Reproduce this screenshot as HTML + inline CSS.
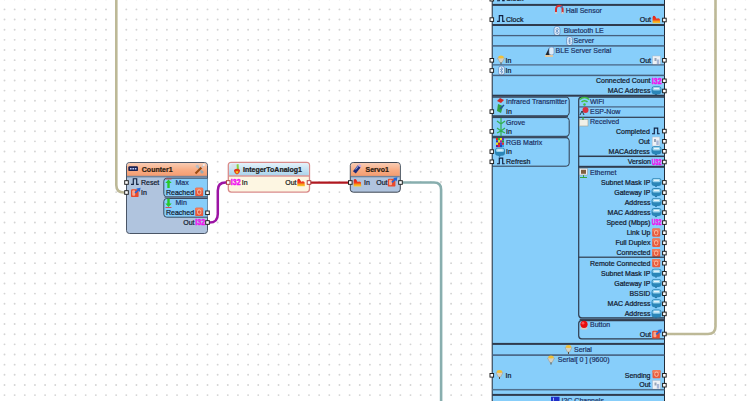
<!DOCTYPE html>
<html><head><meta charset="utf-8"><style>
html,body{margin:0;padding:0;background:#fff;width:748px;height:401px;overflow:hidden}
svg{display:block;font-family:"Liberation Sans", sans-serif}
</style></head><body>
<svg width="748" height="401" viewBox="0 0 748 401">
<g fill="#d4d4d4"><circle cx="4.50" cy="-0.75" r="0.95"/><circle cx="4.50" cy="9.40" r="0.95"/><circle cx="4.50" cy="19.55" r="0.95"/><circle cx="4.50" cy="29.70" r="0.95"/><circle cx="4.50" cy="39.85" r="0.95"/><circle cx="4.50" cy="50.00" r="0.95"/><circle cx="4.50" cy="60.15" r="0.95"/><circle cx="4.50" cy="70.30" r="0.95"/><circle cx="4.50" cy="80.45" r="0.95"/><circle cx="4.50" cy="90.60" r="0.95"/><circle cx="4.50" cy="100.75" r="0.95"/><circle cx="4.50" cy="110.90" r="0.95"/><circle cx="4.50" cy="121.05" r="0.95"/><circle cx="4.50" cy="131.20" r="0.95"/><circle cx="4.50" cy="141.35" r="0.95"/><circle cx="4.50" cy="151.50" r="0.95"/><circle cx="4.50" cy="161.65" r="0.95"/><circle cx="4.50" cy="171.80" r="0.95"/><circle cx="4.50" cy="181.95" r="0.95"/><circle cx="4.50" cy="192.10" r="0.95"/><circle cx="4.50" cy="202.25" r="0.95"/><circle cx="4.50" cy="212.40" r="0.95"/><circle cx="4.50" cy="222.55" r="0.95"/><circle cx="4.50" cy="232.70" r="0.95"/><circle cx="4.50" cy="242.85" r="0.95"/><circle cx="4.50" cy="253.00" r="0.95"/><circle cx="4.50" cy="263.15" r="0.95"/><circle cx="4.50" cy="273.30" r="0.95"/><circle cx="4.50" cy="283.45" r="0.95"/><circle cx="4.50" cy="293.60" r="0.95"/><circle cx="4.50" cy="303.75" r="0.95"/><circle cx="4.50" cy="313.90" r="0.95"/><circle cx="4.50" cy="324.05" r="0.95"/><circle cx="4.50" cy="334.20" r="0.95"/><circle cx="4.50" cy="344.35" r="0.95"/><circle cx="4.50" cy="354.50" r="0.95"/><circle cx="4.50" cy="364.65" r="0.95"/><circle cx="4.50" cy="374.80" r="0.95"/><circle cx="4.50" cy="384.95" r="0.95"/><circle cx="4.50" cy="395.10" r="0.95"/><circle cx="14.65" cy="-0.75" r="0.95"/><circle cx="14.65" cy="9.40" r="0.95"/><circle cx="14.65" cy="19.55" r="0.95"/><circle cx="14.65" cy="29.70" r="0.95"/><circle cx="14.65" cy="39.85" r="0.95"/><circle cx="14.65" cy="50.00" r="0.95"/><circle cx="14.65" cy="60.15" r="0.95"/><circle cx="14.65" cy="70.30" r="0.95"/><circle cx="14.65" cy="80.45" r="0.95"/><circle cx="14.65" cy="90.60" r="0.95"/><circle cx="14.65" cy="100.75" r="0.95"/><circle cx="14.65" cy="110.90" r="0.95"/><circle cx="14.65" cy="121.05" r="0.95"/><circle cx="14.65" cy="131.20" r="0.95"/><circle cx="14.65" cy="141.35" r="0.95"/><circle cx="14.65" cy="151.50" r="0.95"/><circle cx="14.65" cy="161.65" r="0.95"/><circle cx="14.65" cy="171.80" r="0.95"/><circle cx="14.65" cy="181.95" r="0.95"/><circle cx="14.65" cy="192.10" r="0.95"/><circle cx="14.65" cy="202.25" r="0.95"/><circle cx="14.65" cy="212.40" r="0.95"/><circle cx="14.65" cy="222.55" r="0.95"/><circle cx="14.65" cy="232.70" r="0.95"/><circle cx="14.65" cy="242.85" r="0.95"/><circle cx="14.65" cy="253.00" r="0.95"/><circle cx="14.65" cy="263.15" r="0.95"/><circle cx="14.65" cy="273.30" r="0.95"/><circle cx="14.65" cy="283.45" r="0.95"/><circle cx="14.65" cy="293.60" r="0.95"/><circle cx="14.65" cy="303.75" r="0.95"/><circle cx="14.65" cy="313.90" r="0.95"/><circle cx="14.65" cy="324.05" r="0.95"/><circle cx="14.65" cy="334.20" r="0.95"/><circle cx="14.65" cy="344.35" r="0.95"/><circle cx="14.65" cy="354.50" r="0.95"/><circle cx="14.65" cy="364.65" r="0.95"/><circle cx="14.65" cy="374.80" r="0.95"/><circle cx="14.65" cy="384.95" r="0.95"/><circle cx="14.65" cy="395.10" r="0.95"/><circle cx="24.80" cy="-0.75" r="0.95"/><circle cx="24.80" cy="9.40" r="0.95"/><circle cx="24.80" cy="19.55" r="0.95"/><circle cx="24.80" cy="29.70" r="0.95"/><circle cx="24.80" cy="39.85" r="0.95"/><circle cx="24.80" cy="50.00" r="0.95"/><circle cx="24.80" cy="60.15" r="0.95"/><circle cx="24.80" cy="70.30" r="0.95"/><circle cx="24.80" cy="80.45" r="0.95"/><circle cx="24.80" cy="90.60" r="0.95"/><circle cx="24.80" cy="100.75" r="0.95"/><circle cx="24.80" cy="110.90" r="0.95"/><circle cx="24.80" cy="121.05" r="0.95"/><circle cx="24.80" cy="131.20" r="0.95"/><circle cx="24.80" cy="141.35" r="0.95"/><circle cx="24.80" cy="151.50" r="0.95"/><circle cx="24.80" cy="161.65" r="0.95"/><circle cx="24.80" cy="171.80" r="0.95"/><circle cx="24.80" cy="181.95" r="0.95"/><circle cx="24.80" cy="192.10" r="0.95"/><circle cx="24.80" cy="202.25" r="0.95"/><circle cx="24.80" cy="212.40" r="0.95"/><circle cx="24.80" cy="222.55" r="0.95"/><circle cx="24.80" cy="232.70" r="0.95"/><circle cx="24.80" cy="242.85" r="0.95"/><circle cx="24.80" cy="253.00" r="0.95"/><circle cx="24.80" cy="263.15" r="0.95"/><circle cx="24.80" cy="273.30" r="0.95"/><circle cx="24.80" cy="283.45" r="0.95"/><circle cx="24.80" cy="293.60" r="0.95"/><circle cx="24.80" cy="303.75" r="0.95"/><circle cx="24.80" cy="313.90" r="0.95"/><circle cx="24.80" cy="324.05" r="0.95"/><circle cx="24.80" cy="334.20" r="0.95"/><circle cx="24.80" cy="344.35" r="0.95"/><circle cx="24.80" cy="354.50" r="0.95"/><circle cx="24.80" cy="364.65" r="0.95"/><circle cx="24.80" cy="374.80" r="0.95"/><circle cx="24.80" cy="384.95" r="0.95"/><circle cx="24.80" cy="395.10" r="0.95"/><circle cx="34.95" cy="-0.75" r="0.95"/><circle cx="34.95" cy="9.40" r="0.95"/><circle cx="34.95" cy="19.55" r="0.95"/><circle cx="34.95" cy="29.70" r="0.95"/><circle cx="34.95" cy="39.85" r="0.95"/><circle cx="34.95" cy="50.00" r="0.95"/><circle cx="34.95" cy="60.15" r="0.95"/><circle cx="34.95" cy="70.30" r="0.95"/><circle cx="34.95" cy="80.45" r="0.95"/><circle cx="34.95" cy="90.60" r="0.95"/><circle cx="34.95" cy="100.75" r="0.95"/><circle cx="34.95" cy="110.90" r="0.95"/><circle cx="34.95" cy="121.05" r="0.95"/><circle cx="34.95" cy="131.20" r="0.95"/><circle cx="34.95" cy="141.35" r="0.95"/><circle cx="34.95" cy="151.50" r="0.95"/><circle cx="34.95" cy="161.65" r="0.95"/><circle cx="34.95" cy="171.80" r="0.95"/><circle cx="34.95" cy="181.95" r="0.95"/><circle cx="34.95" cy="192.10" r="0.95"/><circle cx="34.95" cy="202.25" r="0.95"/><circle cx="34.95" cy="212.40" r="0.95"/><circle cx="34.95" cy="222.55" r="0.95"/><circle cx="34.95" cy="232.70" r="0.95"/><circle cx="34.95" cy="242.85" r="0.95"/><circle cx="34.95" cy="253.00" r="0.95"/><circle cx="34.95" cy="263.15" r="0.95"/><circle cx="34.95" cy="273.30" r="0.95"/><circle cx="34.95" cy="283.45" r="0.95"/><circle cx="34.95" cy="293.60" r="0.95"/><circle cx="34.95" cy="303.75" r="0.95"/><circle cx="34.95" cy="313.90" r="0.95"/><circle cx="34.95" cy="324.05" r="0.95"/><circle cx="34.95" cy="334.20" r="0.95"/><circle cx="34.95" cy="344.35" r="0.95"/><circle cx="34.95" cy="354.50" r="0.95"/><circle cx="34.95" cy="364.65" r="0.95"/><circle cx="34.95" cy="374.80" r="0.95"/><circle cx="34.95" cy="384.95" r="0.95"/><circle cx="34.95" cy="395.10" r="0.95"/><circle cx="45.10" cy="-0.75" r="0.95"/><circle cx="45.10" cy="9.40" r="0.95"/><circle cx="45.10" cy="19.55" r="0.95"/><circle cx="45.10" cy="29.70" r="0.95"/><circle cx="45.10" cy="39.85" r="0.95"/><circle cx="45.10" cy="50.00" r="0.95"/><circle cx="45.10" cy="60.15" r="0.95"/><circle cx="45.10" cy="70.30" r="0.95"/><circle cx="45.10" cy="80.45" r="0.95"/><circle cx="45.10" cy="90.60" r="0.95"/><circle cx="45.10" cy="100.75" r="0.95"/><circle cx="45.10" cy="110.90" r="0.95"/><circle cx="45.10" cy="121.05" r="0.95"/><circle cx="45.10" cy="131.20" r="0.95"/><circle cx="45.10" cy="141.35" r="0.95"/><circle cx="45.10" cy="151.50" r="0.95"/><circle cx="45.10" cy="161.65" r="0.95"/><circle cx="45.10" cy="171.80" r="0.95"/><circle cx="45.10" cy="181.95" r="0.95"/><circle cx="45.10" cy="192.10" r="0.95"/><circle cx="45.10" cy="202.25" r="0.95"/><circle cx="45.10" cy="212.40" r="0.95"/><circle cx="45.10" cy="222.55" r="0.95"/><circle cx="45.10" cy="232.70" r="0.95"/><circle cx="45.10" cy="242.85" r="0.95"/><circle cx="45.10" cy="253.00" r="0.95"/><circle cx="45.10" cy="263.15" r="0.95"/><circle cx="45.10" cy="273.30" r="0.95"/><circle cx="45.10" cy="283.45" r="0.95"/><circle cx="45.10" cy="293.60" r="0.95"/><circle cx="45.10" cy="303.75" r="0.95"/><circle cx="45.10" cy="313.90" r="0.95"/><circle cx="45.10" cy="324.05" r="0.95"/><circle cx="45.10" cy="334.20" r="0.95"/><circle cx="45.10" cy="344.35" r="0.95"/><circle cx="45.10" cy="354.50" r="0.95"/><circle cx="45.10" cy="364.65" r="0.95"/><circle cx="45.10" cy="374.80" r="0.95"/><circle cx="45.10" cy="384.95" r="0.95"/><circle cx="45.10" cy="395.10" r="0.95"/><circle cx="55.25" cy="-0.75" r="0.95"/><circle cx="55.25" cy="9.40" r="0.95"/><circle cx="55.25" cy="19.55" r="0.95"/><circle cx="55.25" cy="29.70" r="0.95"/><circle cx="55.25" cy="39.85" r="0.95"/><circle cx="55.25" cy="50.00" r="0.95"/><circle cx="55.25" cy="60.15" r="0.95"/><circle cx="55.25" cy="70.30" r="0.95"/><circle cx="55.25" cy="80.45" r="0.95"/><circle cx="55.25" cy="90.60" r="0.95"/><circle cx="55.25" cy="100.75" r="0.95"/><circle cx="55.25" cy="110.90" r="0.95"/><circle cx="55.25" cy="121.05" r="0.95"/><circle cx="55.25" cy="131.20" r="0.95"/><circle cx="55.25" cy="141.35" r="0.95"/><circle cx="55.25" cy="151.50" r="0.95"/><circle cx="55.25" cy="161.65" r="0.95"/><circle cx="55.25" cy="171.80" r="0.95"/><circle cx="55.25" cy="181.95" r="0.95"/><circle cx="55.25" cy="192.10" r="0.95"/><circle cx="55.25" cy="202.25" r="0.95"/><circle cx="55.25" cy="212.40" r="0.95"/><circle cx="55.25" cy="222.55" r="0.95"/><circle cx="55.25" cy="232.70" r="0.95"/><circle cx="55.25" cy="242.85" r="0.95"/><circle cx="55.25" cy="253.00" r="0.95"/><circle cx="55.25" cy="263.15" r="0.95"/><circle cx="55.25" cy="273.30" r="0.95"/><circle cx="55.25" cy="283.45" r="0.95"/><circle cx="55.25" cy="293.60" r="0.95"/><circle cx="55.25" cy="303.75" r="0.95"/><circle cx="55.25" cy="313.90" r="0.95"/><circle cx="55.25" cy="324.05" r="0.95"/><circle cx="55.25" cy="334.20" r="0.95"/><circle cx="55.25" cy="344.35" r="0.95"/><circle cx="55.25" cy="354.50" r="0.95"/><circle cx="55.25" cy="364.65" r="0.95"/><circle cx="55.25" cy="374.80" r="0.95"/><circle cx="55.25" cy="384.95" r="0.95"/><circle cx="55.25" cy="395.10" r="0.95"/><circle cx="65.40" cy="-0.75" r="0.95"/><circle cx="65.40" cy="9.40" r="0.95"/><circle cx="65.40" cy="19.55" r="0.95"/><circle cx="65.40" cy="29.70" r="0.95"/><circle cx="65.40" cy="39.85" r="0.95"/><circle cx="65.40" cy="50.00" r="0.95"/><circle cx="65.40" cy="60.15" r="0.95"/><circle cx="65.40" cy="70.30" r="0.95"/><circle cx="65.40" cy="80.45" r="0.95"/><circle cx="65.40" cy="90.60" r="0.95"/><circle cx="65.40" cy="100.75" r="0.95"/><circle cx="65.40" cy="110.90" r="0.95"/><circle cx="65.40" cy="121.05" r="0.95"/><circle cx="65.40" cy="131.20" r="0.95"/><circle cx="65.40" cy="141.35" r="0.95"/><circle cx="65.40" cy="151.50" r="0.95"/><circle cx="65.40" cy="161.65" r="0.95"/><circle cx="65.40" cy="171.80" r="0.95"/><circle cx="65.40" cy="181.95" r="0.95"/><circle cx="65.40" cy="192.10" r="0.95"/><circle cx="65.40" cy="202.25" r="0.95"/><circle cx="65.40" cy="212.40" r="0.95"/><circle cx="65.40" cy="222.55" r="0.95"/><circle cx="65.40" cy="232.70" r="0.95"/><circle cx="65.40" cy="242.85" r="0.95"/><circle cx="65.40" cy="253.00" r="0.95"/><circle cx="65.40" cy="263.15" r="0.95"/><circle cx="65.40" cy="273.30" r="0.95"/><circle cx="65.40" cy="283.45" r="0.95"/><circle cx="65.40" cy="293.60" r="0.95"/><circle cx="65.40" cy="303.75" r="0.95"/><circle cx="65.40" cy="313.90" r="0.95"/><circle cx="65.40" cy="324.05" r="0.95"/><circle cx="65.40" cy="334.20" r="0.95"/><circle cx="65.40" cy="344.35" r="0.95"/><circle cx="65.40" cy="354.50" r="0.95"/><circle cx="65.40" cy="364.65" r="0.95"/><circle cx="65.40" cy="374.80" r="0.95"/><circle cx="65.40" cy="384.95" r="0.95"/><circle cx="65.40" cy="395.10" r="0.95"/><circle cx="75.55" cy="-0.75" r="0.95"/><circle cx="75.55" cy="9.40" r="0.95"/><circle cx="75.55" cy="19.55" r="0.95"/><circle cx="75.55" cy="29.70" r="0.95"/><circle cx="75.55" cy="39.85" r="0.95"/><circle cx="75.55" cy="50.00" r="0.95"/><circle cx="75.55" cy="60.15" r="0.95"/><circle cx="75.55" cy="70.30" r="0.95"/><circle cx="75.55" cy="80.45" r="0.95"/><circle cx="75.55" cy="90.60" r="0.95"/><circle cx="75.55" cy="100.75" r="0.95"/><circle cx="75.55" cy="110.90" r="0.95"/><circle cx="75.55" cy="121.05" r="0.95"/><circle cx="75.55" cy="131.20" r="0.95"/><circle cx="75.55" cy="141.35" r="0.95"/><circle cx="75.55" cy="151.50" r="0.95"/><circle cx="75.55" cy="161.65" r="0.95"/><circle cx="75.55" cy="171.80" r="0.95"/><circle cx="75.55" cy="181.95" r="0.95"/><circle cx="75.55" cy="192.10" r="0.95"/><circle cx="75.55" cy="202.25" r="0.95"/><circle cx="75.55" cy="212.40" r="0.95"/><circle cx="75.55" cy="222.55" r="0.95"/><circle cx="75.55" cy="232.70" r="0.95"/><circle cx="75.55" cy="242.85" r="0.95"/><circle cx="75.55" cy="253.00" r="0.95"/><circle cx="75.55" cy="263.15" r="0.95"/><circle cx="75.55" cy="273.30" r="0.95"/><circle cx="75.55" cy="283.45" r="0.95"/><circle cx="75.55" cy="293.60" r="0.95"/><circle cx="75.55" cy="303.75" r="0.95"/><circle cx="75.55" cy="313.90" r="0.95"/><circle cx="75.55" cy="324.05" r="0.95"/><circle cx="75.55" cy="334.20" r="0.95"/><circle cx="75.55" cy="344.35" r="0.95"/><circle cx="75.55" cy="354.50" r="0.95"/><circle cx="75.55" cy="364.65" r="0.95"/><circle cx="75.55" cy="374.80" r="0.95"/><circle cx="75.55" cy="384.95" r="0.95"/><circle cx="75.55" cy="395.10" r="0.95"/><circle cx="85.70" cy="-0.75" r="0.95"/><circle cx="85.70" cy="9.40" r="0.95"/><circle cx="85.70" cy="19.55" r="0.95"/><circle cx="85.70" cy="29.70" r="0.95"/><circle cx="85.70" cy="39.85" r="0.95"/><circle cx="85.70" cy="50.00" r="0.95"/><circle cx="85.70" cy="60.15" r="0.95"/><circle cx="85.70" cy="70.30" r="0.95"/><circle cx="85.70" cy="80.45" r="0.95"/><circle cx="85.70" cy="90.60" r="0.95"/><circle cx="85.70" cy="100.75" r="0.95"/><circle cx="85.70" cy="110.90" r="0.95"/><circle cx="85.70" cy="121.05" r="0.95"/><circle cx="85.70" cy="131.20" r="0.95"/><circle cx="85.70" cy="141.35" r="0.95"/><circle cx="85.70" cy="151.50" r="0.95"/><circle cx="85.70" cy="161.65" r="0.95"/><circle cx="85.70" cy="171.80" r="0.95"/><circle cx="85.70" cy="181.95" r="0.95"/><circle cx="85.70" cy="192.10" r="0.95"/><circle cx="85.70" cy="202.25" r="0.95"/><circle cx="85.70" cy="212.40" r="0.95"/><circle cx="85.70" cy="222.55" r="0.95"/><circle cx="85.70" cy="232.70" r="0.95"/><circle cx="85.70" cy="242.85" r="0.95"/><circle cx="85.70" cy="253.00" r="0.95"/><circle cx="85.70" cy="263.15" r="0.95"/><circle cx="85.70" cy="273.30" r="0.95"/><circle cx="85.70" cy="283.45" r="0.95"/><circle cx="85.70" cy="293.60" r="0.95"/><circle cx="85.70" cy="303.75" r="0.95"/><circle cx="85.70" cy="313.90" r="0.95"/><circle cx="85.70" cy="324.05" r="0.95"/><circle cx="85.70" cy="334.20" r="0.95"/><circle cx="85.70" cy="344.35" r="0.95"/><circle cx="85.70" cy="354.50" r="0.95"/><circle cx="85.70" cy="364.65" r="0.95"/><circle cx="85.70" cy="374.80" r="0.95"/><circle cx="85.70" cy="384.95" r="0.95"/><circle cx="85.70" cy="395.10" r="0.95"/><circle cx="95.85" cy="-0.75" r="0.95"/><circle cx="95.85" cy="9.40" r="0.95"/><circle cx="95.85" cy="19.55" r="0.95"/><circle cx="95.85" cy="29.70" r="0.95"/><circle cx="95.85" cy="39.85" r="0.95"/><circle cx="95.85" cy="50.00" r="0.95"/><circle cx="95.85" cy="60.15" r="0.95"/><circle cx="95.85" cy="70.30" r="0.95"/><circle cx="95.85" cy="80.45" r="0.95"/><circle cx="95.85" cy="90.60" r="0.95"/><circle cx="95.85" cy="100.75" r="0.95"/><circle cx="95.85" cy="110.90" r="0.95"/><circle cx="95.85" cy="121.05" r="0.95"/><circle cx="95.85" cy="131.20" r="0.95"/><circle cx="95.85" cy="141.35" r="0.95"/><circle cx="95.85" cy="151.50" r="0.95"/><circle cx="95.85" cy="161.65" r="0.95"/><circle cx="95.85" cy="171.80" r="0.95"/><circle cx="95.85" cy="181.95" r="0.95"/><circle cx="95.85" cy="192.10" r="0.95"/><circle cx="95.85" cy="202.25" r="0.95"/><circle cx="95.85" cy="212.40" r="0.95"/><circle cx="95.85" cy="222.55" r="0.95"/><circle cx="95.85" cy="232.70" r="0.95"/><circle cx="95.85" cy="242.85" r="0.95"/><circle cx="95.85" cy="253.00" r="0.95"/><circle cx="95.85" cy="263.15" r="0.95"/><circle cx="95.85" cy="273.30" r="0.95"/><circle cx="95.85" cy="283.45" r="0.95"/><circle cx="95.85" cy="293.60" r="0.95"/><circle cx="95.85" cy="303.75" r="0.95"/><circle cx="95.85" cy="313.90" r="0.95"/><circle cx="95.85" cy="324.05" r="0.95"/><circle cx="95.85" cy="334.20" r="0.95"/><circle cx="95.85" cy="344.35" r="0.95"/><circle cx="95.85" cy="354.50" r="0.95"/><circle cx="95.85" cy="364.65" r="0.95"/><circle cx="95.85" cy="374.80" r="0.95"/><circle cx="95.85" cy="384.95" r="0.95"/><circle cx="95.85" cy="395.10" r="0.95"/><circle cx="106.00" cy="-0.75" r="0.95"/><circle cx="106.00" cy="9.40" r="0.95"/><circle cx="106.00" cy="19.55" r="0.95"/><circle cx="106.00" cy="29.70" r="0.95"/><circle cx="106.00" cy="39.85" r="0.95"/><circle cx="106.00" cy="50.00" r="0.95"/><circle cx="106.00" cy="60.15" r="0.95"/><circle cx="106.00" cy="70.30" r="0.95"/><circle cx="106.00" cy="80.45" r="0.95"/><circle cx="106.00" cy="90.60" r="0.95"/><circle cx="106.00" cy="100.75" r="0.95"/><circle cx="106.00" cy="110.90" r="0.95"/><circle cx="106.00" cy="121.05" r="0.95"/><circle cx="106.00" cy="131.20" r="0.95"/><circle cx="106.00" cy="141.35" r="0.95"/><circle cx="106.00" cy="151.50" r="0.95"/><circle cx="106.00" cy="161.65" r="0.95"/><circle cx="106.00" cy="171.80" r="0.95"/><circle cx="106.00" cy="181.95" r="0.95"/><circle cx="106.00" cy="192.10" r="0.95"/><circle cx="106.00" cy="202.25" r="0.95"/><circle cx="106.00" cy="212.40" r="0.95"/><circle cx="106.00" cy="222.55" r="0.95"/><circle cx="106.00" cy="232.70" r="0.95"/><circle cx="106.00" cy="242.85" r="0.95"/><circle cx="106.00" cy="253.00" r="0.95"/><circle cx="106.00" cy="263.15" r="0.95"/><circle cx="106.00" cy="273.30" r="0.95"/><circle cx="106.00" cy="283.45" r="0.95"/><circle cx="106.00" cy="293.60" r="0.95"/><circle cx="106.00" cy="303.75" r="0.95"/><circle cx="106.00" cy="313.90" r="0.95"/><circle cx="106.00" cy="324.05" r="0.95"/><circle cx="106.00" cy="334.20" r="0.95"/><circle cx="106.00" cy="344.35" r="0.95"/><circle cx="106.00" cy="354.50" r="0.95"/><circle cx="106.00" cy="364.65" r="0.95"/><circle cx="106.00" cy="374.80" r="0.95"/><circle cx="106.00" cy="384.95" r="0.95"/><circle cx="106.00" cy="395.10" r="0.95"/><circle cx="116.15" cy="-0.75" r="0.95"/><circle cx="116.15" cy="9.40" r="0.95"/><circle cx="116.15" cy="19.55" r="0.95"/><circle cx="116.15" cy="29.70" r="0.95"/><circle cx="116.15" cy="39.85" r="0.95"/><circle cx="116.15" cy="50.00" r="0.95"/><circle cx="116.15" cy="60.15" r="0.95"/><circle cx="116.15" cy="70.30" r="0.95"/><circle cx="116.15" cy="80.45" r="0.95"/><circle cx="116.15" cy="90.60" r="0.95"/><circle cx="116.15" cy="100.75" r="0.95"/><circle cx="116.15" cy="110.90" r="0.95"/><circle cx="116.15" cy="121.05" r="0.95"/><circle cx="116.15" cy="131.20" r="0.95"/><circle cx="116.15" cy="141.35" r="0.95"/><circle cx="116.15" cy="151.50" r="0.95"/><circle cx="116.15" cy="161.65" r="0.95"/><circle cx="116.15" cy="171.80" r="0.95"/><circle cx="116.15" cy="181.95" r="0.95"/><circle cx="116.15" cy="192.10" r="0.95"/><circle cx="116.15" cy="202.25" r="0.95"/><circle cx="116.15" cy="212.40" r="0.95"/><circle cx="116.15" cy="222.55" r="0.95"/><circle cx="116.15" cy="232.70" r="0.95"/><circle cx="116.15" cy="242.85" r="0.95"/><circle cx="116.15" cy="253.00" r="0.95"/><circle cx="116.15" cy="263.15" r="0.95"/><circle cx="116.15" cy="273.30" r="0.95"/><circle cx="116.15" cy="283.45" r="0.95"/><circle cx="116.15" cy="293.60" r="0.95"/><circle cx="116.15" cy="303.75" r="0.95"/><circle cx="116.15" cy="313.90" r="0.95"/><circle cx="116.15" cy="324.05" r="0.95"/><circle cx="116.15" cy="334.20" r="0.95"/><circle cx="116.15" cy="344.35" r="0.95"/><circle cx="116.15" cy="354.50" r="0.95"/><circle cx="116.15" cy="364.65" r="0.95"/><circle cx="116.15" cy="374.80" r="0.95"/><circle cx="116.15" cy="384.95" r="0.95"/><circle cx="116.15" cy="395.10" r="0.95"/><circle cx="126.30" cy="-0.75" r="0.95"/><circle cx="126.30" cy="9.40" r="0.95"/><circle cx="126.30" cy="19.55" r="0.95"/><circle cx="126.30" cy="29.70" r="0.95"/><circle cx="126.30" cy="39.85" r="0.95"/><circle cx="126.30" cy="50.00" r="0.95"/><circle cx="126.30" cy="60.15" r="0.95"/><circle cx="126.30" cy="70.30" r="0.95"/><circle cx="126.30" cy="80.45" r="0.95"/><circle cx="126.30" cy="90.60" r="0.95"/><circle cx="126.30" cy="100.75" r="0.95"/><circle cx="126.30" cy="110.90" r="0.95"/><circle cx="126.30" cy="121.05" r="0.95"/><circle cx="126.30" cy="131.20" r="0.95"/><circle cx="126.30" cy="141.35" r="0.95"/><circle cx="126.30" cy="151.50" r="0.95"/><circle cx="126.30" cy="242.85" r="0.95"/><circle cx="126.30" cy="253.00" r="0.95"/><circle cx="126.30" cy="263.15" r="0.95"/><circle cx="126.30" cy="273.30" r="0.95"/><circle cx="126.30" cy="283.45" r="0.95"/><circle cx="126.30" cy="293.60" r="0.95"/><circle cx="126.30" cy="303.75" r="0.95"/><circle cx="126.30" cy="313.90" r="0.95"/><circle cx="126.30" cy="324.05" r="0.95"/><circle cx="126.30" cy="334.20" r="0.95"/><circle cx="126.30" cy="344.35" r="0.95"/><circle cx="126.30" cy="354.50" r="0.95"/><circle cx="126.30" cy="364.65" r="0.95"/><circle cx="126.30" cy="374.80" r="0.95"/><circle cx="126.30" cy="384.95" r="0.95"/><circle cx="126.30" cy="395.10" r="0.95"/><circle cx="136.45" cy="-0.75" r="0.95"/><circle cx="136.45" cy="9.40" r="0.95"/><circle cx="136.45" cy="19.55" r="0.95"/><circle cx="136.45" cy="29.70" r="0.95"/><circle cx="136.45" cy="39.85" r="0.95"/><circle cx="136.45" cy="50.00" r="0.95"/><circle cx="136.45" cy="60.15" r="0.95"/><circle cx="136.45" cy="70.30" r="0.95"/><circle cx="136.45" cy="80.45" r="0.95"/><circle cx="136.45" cy="90.60" r="0.95"/><circle cx="136.45" cy="100.75" r="0.95"/><circle cx="136.45" cy="110.90" r="0.95"/><circle cx="136.45" cy="121.05" r="0.95"/><circle cx="136.45" cy="131.20" r="0.95"/><circle cx="136.45" cy="141.35" r="0.95"/><circle cx="136.45" cy="151.50" r="0.95"/><circle cx="136.45" cy="242.85" r="0.95"/><circle cx="136.45" cy="253.00" r="0.95"/><circle cx="136.45" cy="263.15" r="0.95"/><circle cx="136.45" cy="273.30" r="0.95"/><circle cx="136.45" cy="283.45" r="0.95"/><circle cx="136.45" cy="293.60" r="0.95"/><circle cx="136.45" cy="303.75" r="0.95"/><circle cx="136.45" cy="313.90" r="0.95"/><circle cx="136.45" cy="324.05" r="0.95"/><circle cx="136.45" cy="334.20" r="0.95"/><circle cx="136.45" cy="344.35" r="0.95"/><circle cx="136.45" cy="354.50" r="0.95"/><circle cx="136.45" cy="364.65" r="0.95"/><circle cx="136.45" cy="374.80" r="0.95"/><circle cx="136.45" cy="384.95" r="0.95"/><circle cx="136.45" cy="395.10" r="0.95"/><circle cx="146.60" cy="-0.75" r="0.95"/><circle cx="146.60" cy="9.40" r="0.95"/><circle cx="146.60" cy="19.55" r="0.95"/><circle cx="146.60" cy="29.70" r="0.95"/><circle cx="146.60" cy="39.85" r="0.95"/><circle cx="146.60" cy="50.00" r="0.95"/><circle cx="146.60" cy="60.15" r="0.95"/><circle cx="146.60" cy="70.30" r="0.95"/><circle cx="146.60" cy="80.45" r="0.95"/><circle cx="146.60" cy="90.60" r="0.95"/><circle cx="146.60" cy="100.75" r="0.95"/><circle cx="146.60" cy="110.90" r="0.95"/><circle cx="146.60" cy="121.05" r="0.95"/><circle cx="146.60" cy="131.20" r="0.95"/><circle cx="146.60" cy="141.35" r="0.95"/><circle cx="146.60" cy="151.50" r="0.95"/><circle cx="146.60" cy="242.85" r="0.95"/><circle cx="146.60" cy="253.00" r="0.95"/><circle cx="146.60" cy="263.15" r="0.95"/><circle cx="146.60" cy="273.30" r="0.95"/><circle cx="146.60" cy="283.45" r="0.95"/><circle cx="146.60" cy="293.60" r="0.95"/><circle cx="146.60" cy="303.75" r="0.95"/><circle cx="146.60" cy="313.90" r="0.95"/><circle cx="146.60" cy="324.05" r="0.95"/><circle cx="146.60" cy="334.20" r="0.95"/><circle cx="146.60" cy="344.35" r="0.95"/><circle cx="146.60" cy="354.50" r="0.95"/><circle cx="146.60" cy="364.65" r="0.95"/><circle cx="146.60" cy="374.80" r="0.95"/><circle cx="146.60" cy="384.95" r="0.95"/><circle cx="146.60" cy="395.10" r="0.95"/><circle cx="156.75" cy="-0.75" r="0.95"/><circle cx="156.75" cy="9.40" r="0.95"/><circle cx="156.75" cy="19.55" r="0.95"/><circle cx="156.75" cy="29.70" r="0.95"/><circle cx="156.75" cy="39.85" r="0.95"/><circle cx="156.75" cy="50.00" r="0.95"/><circle cx="156.75" cy="60.15" r="0.95"/><circle cx="156.75" cy="70.30" r="0.95"/><circle cx="156.75" cy="80.45" r="0.95"/><circle cx="156.75" cy="90.60" r="0.95"/><circle cx="156.75" cy="100.75" r="0.95"/><circle cx="156.75" cy="110.90" r="0.95"/><circle cx="156.75" cy="121.05" r="0.95"/><circle cx="156.75" cy="131.20" r="0.95"/><circle cx="156.75" cy="141.35" r="0.95"/><circle cx="156.75" cy="151.50" r="0.95"/><circle cx="156.75" cy="242.85" r="0.95"/><circle cx="156.75" cy="253.00" r="0.95"/><circle cx="156.75" cy="263.15" r="0.95"/><circle cx="156.75" cy="273.30" r="0.95"/><circle cx="156.75" cy="283.45" r="0.95"/><circle cx="156.75" cy="293.60" r="0.95"/><circle cx="156.75" cy="303.75" r="0.95"/><circle cx="156.75" cy="313.90" r="0.95"/><circle cx="156.75" cy="324.05" r="0.95"/><circle cx="156.75" cy="334.20" r="0.95"/><circle cx="156.75" cy="344.35" r="0.95"/><circle cx="156.75" cy="354.50" r="0.95"/><circle cx="156.75" cy="364.65" r="0.95"/><circle cx="156.75" cy="374.80" r="0.95"/><circle cx="156.75" cy="384.95" r="0.95"/><circle cx="156.75" cy="395.10" r="0.95"/><circle cx="166.90" cy="-0.75" r="0.95"/><circle cx="166.90" cy="9.40" r="0.95"/><circle cx="166.90" cy="19.55" r="0.95"/><circle cx="166.90" cy="29.70" r="0.95"/><circle cx="166.90" cy="39.85" r="0.95"/><circle cx="166.90" cy="50.00" r="0.95"/><circle cx="166.90" cy="60.15" r="0.95"/><circle cx="166.90" cy="70.30" r="0.95"/><circle cx="166.90" cy="80.45" r="0.95"/><circle cx="166.90" cy="90.60" r="0.95"/><circle cx="166.90" cy="100.75" r="0.95"/><circle cx="166.90" cy="110.90" r="0.95"/><circle cx="166.90" cy="121.05" r="0.95"/><circle cx="166.90" cy="131.20" r="0.95"/><circle cx="166.90" cy="141.35" r="0.95"/><circle cx="166.90" cy="151.50" r="0.95"/><circle cx="166.90" cy="242.85" r="0.95"/><circle cx="166.90" cy="253.00" r="0.95"/><circle cx="166.90" cy="263.15" r="0.95"/><circle cx="166.90" cy="273.30" r="0.95"/><circle cx="166.90" cy="283.45" r="0.95"/><circle cx="166.90" cy="293.60" r="0.95"/><circle cx="166.90" cy="303.75" r="0.95"/><circle cx="166.90" cy="313.90" r="0.95"/><circle cx="166.90" cy="324.05" r="0.95"/><circle cx="166.90" cy="334.20" r="0.95"/><circle cx="166.90" cy="344.35" r="0.95"/><circle cx="166.90" cy="354.50" r="0.95"/><circle cx="166.90" cy="364.65" r="0.95"/><circle cx="166.90" cy="374.80" r="0.95"/><circle cx="166.90" cy="384.95" r="0.95"/><circle cx="166.90" cy="395.10" r="0.95"/><circle cx="177.05" cy="-0.75" r="0.95"/><circle cx="177.05" cy="9.40" r="0.95"/><circle cx="177.05" cy="19.55" r="0.95"/><circle cx="177.05" cy="29.70" r="0.95"/><circle cx="177.05" cy="39.85" r="0.95"/><circle cx="177.05" cy="50.00" r="0.95"/><circle cx="177.05" cy="60.15" r="0.95"/><circle cx="177.05" cy="70.30" r="0.95"/><circle cx="177.05" cy="80.45" r="0.95"/><circle cx="177.05" cy="90.60" r="0.95"/><circle cx="177.05" cy="100.75" r="0.95"/><circle cx="177.05" cy="110.90" r="0.95"/><circle cx="177.05" cy="121.05" r="0.95"/><circle cx="177.05" cy="131.20" r="0.95"/><circle cx="177.05" cy="141.35" r="0.95"/><circle cx="177.05" cy="151.50" r="0.95"/><circle cx="177.05" cy="242.85" r="0.95"/><circle cx="177.05" cy="253.00" r="0.95"/><circle cx="177.05" cy="263.15" r="0.95"/><circle cx="177.05" cy="273.30" r="0.95"/><circle cx="177.05" cy="283.45" r="0.95"/><circle cx="177.05" cy="293.60" r="0.95"/><circle cx="177.05" cy="303.75" r="0.95"/><circle cx="177.05" cy="313.90" r="0.95"/><circle cx="177.05" cy="324.05" r="0.95"/><circle cx="177.05" cy="334.20" r="0.95"/><circle cx="177.05" cy="344.35" r="0.95"/><circle cx="177.05" cy="354.50" r="0.95"/><circle cx="177.05" cy="364.65" r="0.95"/><circle cx="177.05" cy="374.80" r="0.95"/><circle cx="177.05" cy="384.95" r="0.95"/><circle cx="177.05" cy="395.10" r="0.95"/><circle cx="187.20" cy="-0.75" r="0.95"/><circle cx="187.20" cy="9.40" r="0.95"/><circle cx="187.20" cy="19.55" r="0.95"/><circle cx="187.20" cy="29.70" r="0.95"/><circle cx="187.20" cy="39.85" r="0.95"/><circle cx="187.20" cy="50.00" r="0.95"/><circle cx="187.20" cy="60.15" r="0.95"/><circle cx="187.20" cy="70.30" r="0.95"/><circle cx="187.20" cy="80.45" r="0.95"/><circle cx="187.20" cy="90.60" r="0.95"/><circle cx="187.20" cy="100.75" r="0.95"/><circle cx="187.20" cy="110.90" r="0.95"/><circle cx="187.20" cy="121.05" r="0.95"/><circle cx="187.20" cy="131.20" r="0.95"/><circle cx="187.20" cy="141.35" r="0.95"/><circle cx="187.20" cy="151.50" r="0.95"/><circle cx="187.20" cy="242.85" r="0.95"/><circle cx="187.20" cy="253.00" r="0.95"/><circle cx="187.20" cy="263.15" r="0.95"/><circle cx="187.20" cy="273.30" r="0.95"/><circle cx="187.20" cy="283.45" r="0.95"/><circle cx="187.20" cy="293.60" r="0.95"/><circle cx="187.20" cy="303.75" r="0.95"/><circle cx="187.20" cy="313.90" r="0.95"/><circle cx="187.20" cy="324.05" r="0.95"/><circle cx="187.20" cy="334.20" r="0.95"/><circle cx="187.20" cy="344.35" r="0.95"/><circle cx="187.20" cy="354.50" r="0.95"/><circle cx="187.20" cy="364.65" r="0.95"/><circle cx="187.20" cy="374.80" r="0.95"/><circle cx="187.20" cy="384.95" r="0.95"/><circle cx="187.20" cy="395.10" r="0.95"/><circle cx="197.35" cy="-0.75" r="0.95"/><circle cx="197.35" cy="9.40" r="0.95"/><circle cx="197.35" cy="19.55" r="0.95"/><circle cx="197.35" cy="29.70" r="0.95"/><circle cx="197.35" cy="39.85" r="0.95"/><circle cx="197.35" cy="50.00" r="0.95"/><circle cx="197.35" cy="60.15" r="0.95"/><circle cx="197.35" cy="70.30" r="0.95"/><circle cx="197.35" cy="80.45" r="0.95"/><circle cx="197.35" cy="90.60" r="0.95"/><circle cx="197.35" cy="100.75" r="0.95"/><circle cx="197.35" cy="110.90" r="0.95"/><circle cx="197.35" cy="121.05" r="0.95"/><circle cx="197.35" cy="131.20" r="0.95"/><circle cx="197.35" cy="141.35" r="0.95"/><circle cx="197.35" cy="151.50" r="0.95"/><circle cx="197.35" cy="242.85" r="0.95"/><circle cx="197.35" cy="253.00" r="0.95"/><circle cx="197.35" cy="263.15" r="0.95"/><circle cx="197.35" cy="273.30" r="0.95"/><circle cx="197.35" cy="283.45" r="0.95"/><circle cx="197.35" cy="293.60" r="0.95"/><circle cx="197.35" cy="303.75" r="0.95"/><circle cx="197.35" cy="313.90" r="0.95"/><circle cx="197.35" cy="324.05" r="0.95"/><circle cx="197.35" cy="334.20" r="0.95"/><circle cx="197.35" cy="344.35" r="0.95"/><circle cx="197.35" cy="354.50" r="0.95"/><circle cx="197.35" cy="364.65" r="0.95"/><circle cx="197.35" cy="374.80" r="0.95"/><circle cx="197.35" cy="384.95" r="0.95"/><circle cx="197.35" cy="395.10" r="0.95"/><circle cx="207.50" cy="-0.75" r="0.95"/><circle cx="207.50" cy="9.40" r="0.95"/><circle cx="207.50" cy="19.55" r="0.95"/><circle cx="207.50" cy="29.70" r="0.95"/><circle cx="207.50" cy="39.85" r="0.95"/><circle cx="207.50" cy="50.00" r="0.95"/><circle cx="207.50" cy="60.15" r="0.95"/><circle cx="207.50" cy="70.30" r="0.95"/><circle cx="207.50" cy="80.45" r="0.95"/><circle cx="207.50" cy="90.60" r="0.95"/><circle cx="207.50" cy="100.75" r="0.95"/><circle cx="207.50" cy="110.90" r="0.95"/><circle cx="207.50" cy="121.05" r="0.95"/><circle cx="207.50" cy="131.20" r="0.95"/><circle cx="207.50" cy="141.35" r="0.95"/><circle cx="207.50" cy="151.50" r="0.95"/><circle cx="207.50" cy="242.85" r="0.95"/><circle cx="207.50" cy="253.00" r="0.95"/><circle cx="207.50" cy="263.15" r="0.95"/><circle cx="207.50" cy="273.30" r="0.95"/><circle cx="207.50" cy="283.45" r="0.95"/><circle cx="207.50" cy="293.60" r="0.95"/><circle cx="207.50" cy="303.75" r="0.95"/><circle cx="207.50" cy="313.90" r="0.95"/><circle cx="207.50" cy="324.05" r="0.95"/><circle cx="207.50" cy="334.20" r="0.95"/><circle cx="207.50" cy="344.35" r="0.95"/><circle cx="207.50" cy="354.50" r="0.95"/><circle cx="207.50" cy="364.65" r="0.95"/><circle cx="207.50" cy="374.80" r="0.95"/><circle cx="207.50" cy="384.95" r="0.95"/><circle cx="207.50" cy="395.10" r="0.95"/><circle cx="217.65" cy="-0.75" r="0.95"/><circle cx="217.65" cy="9.40" r="0.95"/><circle cx="217.65" cy="19.55" r="0.95"/><circle cx="217.65" cy="29.70" r="0.95"/><circle cx="217.65" cy="39.85" r="0.95"/><circle cx="217.65" cy="50.00" r="0.95"/><circle cx="217.65" cy="60.15" r="0.95"/><circle cx="217.65" cy="70.30" r="0.95"/><circle cx="217.65" cy="80.45" r="0.95"/><circle cx="217.65" cy="90.60" r="0.95"/><circle cx="217.65" cy="100.75" r="0.95"/><circle cx="217.65" cy="110.90" r="0.95"/><circle cx="217.65" cy="121.05" r="0.95"/><circle cx="217.65" cy="131.20" r="0.95"/><circle cx="217.65" cy="141.35" r="0.95"/><circle cx="217.65" cy="151.50" r="0.95"/><circle cx="217.65" cy="161.65" r="0.95"/><circle cx="217.65" cy="171.80" r="0.95"/><circle cx="217.65" cy="181.95" r="0.95"/><circle cx="217.65" cy="192.10" r="0.95"/><circle cx="217.65" cy="202.25" r="0.95"/><circle cx="217.65" cy="212.40" r="0.95"/><circle cx="217.65" cy="222.55" r="0.95"/><circle cx="217.65" cy="232.70" r="0.95"/><circle cx="217.65" cy="242.85" r="0.95"/><circle cx="217.65" cy="253.00" r="0.95"/><circle cx="217.65" cy="263.15" r="0.95"/><circle cx="217.65" cy="273.30" r="0.95"/><circle cx="217.65" cy="283.45" r="0.95"/><circle cx="217.65" cy="293.60" r="0.95"/><circle cx="217.65" cy="303.75" r="0.95"/><circle cx="217.65" cy="313.90" r="0.95"/><circle cx="217.65" cy="324.05" r="0.95"/><circle cx="217.65" cy="334.20" r="0.95"/><circle cx="217.65" cy="344.35" r="0.95"/><circle cx="217.65" cy="354.50" r="0.95"/><circle cx="217.65" cy="364.65" r="0.95"/><circle cx="217.65" cy="374.80" r="0.95"/><circle cx="217.65" cy="384.95" r="0.95"/><circle cx="217.65" cy="395.10" r="0.95"/><circle cx="227.80" cy="-0.75" r="0.95"/><circle cx="227.80" cy="9.40" r="0.95"/><circle cx="227.80" cy="19.55" r="0.95"/><circle cx="227.80" cy="29.70" r="0.95"/><circle cx="227.80" cy="39.85" r="0.95"/><circle cx="227.80" cy="50.00" r="0.95"/><circle cx="227.80" cy="60.15" r="0.95"/><circle cx="227.80" cy="70.30" r="0.95"/><circle cx="227.80" cy="80.45" r="0.95"/><circle cx="227.80" cy="90.60" r="0.95"/><circle cx="227.80" cy="100.75" r="0.95"/><circle cx="227.80" cy="110.90" r="0.95"/><circle cx="227.80" cy="121.05" r="0.95"/><circle cx="227.80" cy="131.20" r="0.95"/><circle cx="227.80" cy="141.35" r="0.95"/><circle cx="227.80" cy="151.50" r="0.95"/><circle cx="227.80" cy="202.25" r="0.95"/><circle cx="227.80" cy="212.40" r="0.95"/><circle cx="227.80" cy="222.55" r="0.95"/><circle cx="227.80" cy="232.70" r="0.95"/><circle cx="227.80" cy="242.85" r="0.95"/><circle cx="227.80" cy="253.00" r="0.95"/><circle cx="227.80" cy="263.15" r="0.95"/><circle cx="227.80" cy="273.30" r="0.95"/><circle cx="227.80" cy="283.45" r="0.95"/><circle cx="227.80" cy="293.60" r="0.95"/><circle cx="227.80" cy="303.75" r="0.95"/><circle cx="227.80" cy="313.90" r="0.95"/><circle cx="227.80" cy="324.05" r="0.95"/><circle cx="227.80" cy="334.20" r="0.95"/><circle cx="227.80" cy="344.35" r="0.95"/><circle cx="227.80" cy="354.50" r="0.95"/><circle cx="227.80" cy="364.65" r="0.95"/><circle cx="227.80" cy="374.80" r="0.95"/><circle cx="227.80" cy="384.95" r="0.95"/><circle cx="227.80" cy="395.10" r="0.95"/><circle cx="237.95" cy="-0.75" r="0.95"/><circle cx="237.95" cy="9.40" r="0.95"/><circle cx="237.95" cy="19.55" r="0.95"/><circle cx="237.95" cy="29.70" r="0.95"/><circle cx="237.95" cy="39.85" r="0.95"/><circle cx="237.95" cy="50.00" r="0.95"/><circle cx="237.95" cy="60.15" r="0.95"/><circle cx="237.95" cy="70.30" r="0.95"/><circle cx="237.95" cy="80.45" r="0.95"/><circle cx="237.95" cy="90.60" r="0.95"/><circle cx="237.95" cy="100.75" r="0.95"/><circle cx="237.95" cy="110.90" r="0.95"/><circle cx="237.95" cy="121.05" r="0.95"/><circle cx="237.95" cy="131.20" r="0.95"/><circle cx="237.95" cy="141.35" r="0.95"/><circle cx="237.95" cy="151.50" r="0.95"/><circle cx="237.95" cy="202.25" r="0.95"/><circle cx="237.95" cy="212.40" r="0.95"/><circle cx="237.95" cy="222.55" r="0.95"/><circle cx="237.95" cy="232.70" r="0.95"/><circle cx="237.95" cy="242.85" r="0.95"/><circle cx="237.95" cy="253.00" r="0.95"/><circle cx="237.95" cy="263.15" r="0.95"/><circle cx="237.95" cy="273.30" r="0.95"/><circle cx="237.95" cy="283.45" r="0.95"/><circle cx="237.95" cy="293.60" r="0.95"/><circle cx="237.95" cy="303.75" r="0.95"/><circle cx="237.95" cy="313.90" r="0.95"/><circle cx="237.95" cy="324.05" r="0.95"/><circle cx="237.95" cy="334.20" r="0.95"/><circle cx="237.95" cy="344.35" r="0.95"/><circle cx="237.95" cy="354.50" r="0.95"/><circle cx="237.95" cy="364.65" r="0.95"/><circle cx="237.95" cy="374.80" r="0.95"/><circle cx="237.95" cy="384.95" r="0.95"/><circle cx="237.95" cy="395.10" r="0.95"/><circle cx="248.10" cy="-0.75" r="0.95"/><circle cx="248.10" cy="9.40" r="0.95"/><circle cx="248.10" cy="19.55" r="0.95"/><circle cx="248.10" cy="29.70" r="0.95"/><circle cx="248.10" cy="39.85" r="0.95"/><circle cx="248.10" cy="50.00" r="0.95"/><circle cx="248.10" cy="60.15" r="0.95"/><circle cx="248.10" cy="70.30" r="0.95"/><circle cx="248.10" cy="80.45" r="0.95"/><circle cx="248.10" cy="90.60" r="0.95"/><circle cx="248.10" cy="100.75" r="0.95"/><circle cx="248.10" cy="110.90" r="0.95"/><circle cx="248.10" cy="121.05" r="0.95"/><circle cx="248.10" cy="131.20" r="0.95"/><circle cx="248.10" cy="141.35" r="0.95"/><circle cx="248.10" cy="151.50" r="0.95"/><circle cx="248.10" cy="202.25" r="0.95"/><circle cx="248.10" cy="212.40" r="0.95"/><circle cx="248.10" cy="222.55" r="0.95"/><circle cx="248.10" cy="232.70" r="0.95"/><circle cx="248.10" cy="242.85" r="0.95"/><circle cx="248.10" cy="253.00" r="0.95"/><circle cx="248.10" cy="263.15" r="0.95"/><circle cx="248.10" cy="273.30" r="0.95"/><circle cx="248.10" cy="283.45" r="0.95"/><circle cx="248.10" cy="293.60" r="0.95"/><circle cx="248.10" cy="303.75" r="0.95"/><circle cx="248.10" cy="313.90" r="0.95"/><circle cx="248.10" cy="324.05" r="0.95"/><circle cx="248.10" cy="334.20" r="0.95"/><circle cx="248.10" cy="344.35" r="0.95"/><circle cx="248.10" cy="354.50" r="0.95"/><circle cx="248.10" cy="364.65" r="0.95"/><circle cx="248.10" cy="374.80" r="0.95"/><circle cx="248.10" cy="384.95" r="0.95"/><circle cx="248.10" cy="395.10" r="0.95"/><circle cx="258.25" cy="-0.75" r="0.95"/><circle cx="258.25" cy="9.40" r="0.95"/><circle cx="258.25" cy="19.55" r="0.95"/><circle cx="258.25" cy="29.70" r="0.95"/><circle cx="258.25" cy="39.85" r="0.95"/><circle cx="258.25" cy="50.00" r="0.95"/><circle cx="258.25" cy="60.15" r="0.95"/><circle cx="258.25" cy="70.30" r="0.95"/><circle cx="258.25" cy="80.45" r="0.95"/><circle cx="258.25" cy="90.60" r="0.95"/><circle cx="258.25" cy="100.75" r="0.95"/><circle cx="258.25" cy="110.90" r="0.95"/><circle cx="258.25" cy="121.05" r="0.95"/><circle cx="258.25" cy="131.20" r="0.95"/><circle cx="258.25" cy="141.35" r="0.95"/><circle cx="258.25" cy="151.50" r="0.95"/><circle cx="258.25" cy="202.25" r="0.95"/><circle cx="258.25" cy="212.40" r="0.95"/><circle cx="258.25" cy="222.55" r="0.95"/><circle cx="258.25" cy="232.70" r="0.95"/><circle cx="258.25" cy="242.85" r="0.95"/><circle cx="258.25" cy="253.00" r="0.95"/><circle cx="258.25" cy="263.15" r="0.95"/><circle cx="258.25" cy="273.30" r="0.95"/><circle cx="258.25" cy="283.45" r="0.95"/><circle cx="258.25" cy="293.60" r="0.95"/><circle cx="258.25" cy="303.75" r="0.95"/><circle cx="258.25" cy="313.90" r="0.95"/><circle cx="258.25" cy="324.05" r="0.95"/><circle cx="258.25" cy="334.20" r="0.95"/><circle cx="258.25" cy="344.35" r="0.95"/><circle cx="258.25" cy="354.50" r="0.95"/><circle cx="258.25" cy="364.65" r="0.95"/><circle cx="258.25" cy="374.80" r="0.95"/><circle cx="258.25" cy="384.95" r="0.95"/><circle cx="258.25" cy="395.10" r="0.95"/><circle cx="268.40" cy="-0.75" r="0.95"/><circle cx="268.40" cy="9.40" r="0.95"/><circle cx="268.40" cy="19.55" r="0.95"/><circle cx="268.40" cy="29.70" r="0.95"/><circle cx="268.40" cy="39.85" r="0.95"/><circle cx="268.40" cy="50.00" r="0.95"/><circle cx="268.40" cy="60.15" r="0.95"/><circle cx="268.40" cy="70.30" r="0.95"/><circle cx="268.40" cy="80.45" r="0.95"/><circle cx="268.40" cy="90.60" r="0.95"/><circle cx="268.40" cy="100.75" r="0.95"/><circle cx="268.40" cy="110.90" r="0.95"/><circle cx="268.40" cy="121.05" r="0.95"/><circle cx="268.40" cy="131.20" r="0.95"/><circle cx="268.40" cy="141.35" r="0.95"/><circle cx="268.40" cy="151.50" r="0.95"/><circle cx="268.40" cy="202.25" r="0.95"/><circle cx="268.40" cy="212.40" r="0.95"/><circle cx="268.40" cy="222.55" r="0.95"/><circle cx="268.40" cy="232.70" r="0.95"/><circle cx="268.40" cy="242.85" r="0.95"/><circle cx="268.40" cy="253.00" r="0.95"/><circle cx="268.40" cy="263.15" r="0.95"/><circle cx="268.40" cy="273.30" r="0.95"/><circle cx="268.40" cy="283.45" r="0.95"/><circle cx="268.40" cy="293.60" r="0.95"/><circle cx="268.40" cy="303.75" r="0.95"/><circle cx="268.40" cy="313.90" r="0.95"/><circle cx="268.40" cy="324.05" r="0.95"/><circle cx="268.40" cy="334.20" r="0.95"/><circle cx="268.40" cy="344.35" r="0.95"/><circle cx="268.40" cy="354.50" r="0.95"/><circle cx="268.40" cy="364.65" r="0.95"/><circle cx="268.40" cy="374.80" r="0.95"/><circle cx="268.40" cy="384.95" r="0.95"/><circle cx="268.40" cy="395.10" r="0.95"/><circle cx="278.55" cy="-0.75" r="0.95"/><circle cx="278.55" cy="9.40" r="0.95"/><circle cx="278.55" cy="19.55" r="0.95"/><circle cx="278.55" cy="29.70" r="0.95"/><circle cx="278.55" cy="39.85" r="0.95"/><circle cx="278.55" cy="50.00" r="0.95"/><circle cx="278.55" cy="60.15" r="0.95"/><circle cx="278.55" cy="70.30" r="0.95"/><circle cx="278.55" cy="80.45" r="0.95"/><circle cx="278.55" cy="90.60" r="0.95"/><circle cx="278.55" cy="100.75" r="0.95"/><circle cx="278.55" cy="110.90" r="0.95"/><circle cx="278.55" cy="121.05" r="0.95"/><circle cx="278.55" cy="131.20" r="0.95"/><circle cx="278.55" cy="141.35" r="0.95"/><circle cx="278.55" cy="151.50" r="0.95"/><circle cx="278.55" cy="202.25" r="0.95"/><circle cx="278.55" cy="212.40" r="0.95"/><circle cx="278.55" cy="222.55" r="0.95"/><circle cx="278.55" cy="232.70" r="0.95"/><circle cx="278.55" cy="242.85" r="0.95"/><circle cx="278.55" cy="253.00" r="0.95"/><circle cx="278.55" cy="263.15" r="0.95"/><circle cx="278.55" cy="273.30" r="0.95"/><circle cx="278.55" cy="283.45" r="0.95"/><circle cx="278.55" cy="293.60" r="0.95"/><circle cx="278.55" cy="303.75" r="0.95"/><circle cx="278.55" cy="313.90" r="0.95"/><circle cx="278.55" cy="324.05" r="0.95"/><circle cx="278.55" cy="334.20" r="0.95"/><circle cx="278.55" cy="344.35" r="0.95"/><circle cx="278.55" cy="354.50" r="0.95"/><circle cx="278.55" cy="364.65" r="0.95"/><circle cx="278.55" cy="374.80" r="0.95"/><circle cx="278.55" cy="384.95" r="0.95"/><circle cx="278.55" cy="395.10" r="0.95"/><circle cx="288.70" cy="-0.75" r="0.95"/><circle cx="288.70" cy="9.40" r="0.95"/><circle cx="288.70" cy="19.55" r="0.95"/><circle cx="288.70" cy="29.70" r="0.95"/><circle cx="288.70" cy="39.85" r="0.95"/><circle cx="288.70" cy="50.00" r="0.95"/><circle cx="288.70" cy="60.15" r="0.95"/><circle cx="288.70" cy="70.30" r="0.95"/><circle cx="288.70" cy="80.45" r="0.95"/><circle cx="288.70" cy="90.60" r="0.95"/><circle cx="288.70" cy="100.75" r="0.95"/><circle cx="288.70" cy="110.90" r="0.95"/><circle cx="288.70" cy="121.05" r="0.95"/><circle cx="288.70" cy="131.20" r="0.95"/><circle cx="288.70" cy="141.35" r="0.95"/><circle cx="288.70" cy="151.50" r="0.95"/><circle cx="288.70" cy="202.25" r="0.95"/><circle cx="288.70" cy="212.40" r="0.95"/><circle cx="288.70" cy="222.55" r="0.95"/><circle cx="288.70" cy="232.70" r="0.95"/><circle cx="288.70" cy="242.85" r="0.95"/><circle cx="288.70" cy="253.00" r="0.95"/><circle cx="288.70" cy="263.15" r="0.95"/><circle cx="288.70" cy="273.30" r="0.95"/><circle cx="288.70" cy="283.45" r="0.95"/><circle cx="288.70" cy="293.60" r="0.95"/><circle cx="288.70" cy="303.75" r="0.95"/><circle cx="288.70" cy="313.90" r="0.95"/><circle cx="288.70" cy="324.05" r="0.95"/><circle cx="288.70" cy="334.20" r="0.95"/><circle cx="288.70" cy="344.35" r="0.95"/><circle cx="288.70" cy="354.50" r="0.95"/><circle cx="288.70" cy="364.65" r="0.95"/><circle cx="288.70" cy="374.80" r="0.95"/><circle cx="288.70" cy="384.95" r="0.95"/><circle cx="288.70" cy="395.10" r="0.95"/><circle cx="298.85" cy="-0.75" r="0.95"/><circle cx="298.85" cy="9.40" r="0.95"/><circle cx="298.85" cy="19.55" r="0.95"/><circle cx="298.85" cy="29.70" r="0.95"/><circle cx="298.85" cy="39.85" r="0.95"/><circle cx="298.85" cy="50.00" r="0.95"/><circle cx="298.85" cy="60.15" r="0.95"/><circle cx="298.85" cy="70.30" r="0.95"/><circle cx="298.85" cy="80.45" r="0.95"/><circle cx="298.85" cy="90.60" r="0.95"/><circle cx="298.85" cy="100.75" r="0.95"/><circle cx="298.85" cy="110.90" r="0.95"/><circle cx="298.85" cy="121.05" r="0.95"/><circle cx="298.85" cy="131.20" r="0.95"/><circle cx="298.85" cy="141.35" r="0.95"/><circle cx="298.85" cy="151.50" r="0.95"/><circle cx="298.85" cy="202.25" r="0.95"/><circle cx="298.85" cy="212.40" r="0.95"/><circle cx="298.85" cy="222.55" r="0.95"/><circle cx="298.85" cy="232.70" r="0.95"/><circle cx="298.85" cy="242.85" r="0.95"/><circle cx="298.85" cy="253.00" r="0.95"/><circle cx="298.85" cy="263.15" r="0.95"/><circle cx="298.85" cy="273.30" r="0.95"/><circle cx="298.85" cy="283.45" r="0.95"/><circle cx="298.85" cy="293.60" r="0.95"/><circle cx="298.85" cy="303.75" r="0.95"/><circle cx="298.85" cy="313.90" r="0.95"/><circle cx="298.85" cy="324.05" r="0.95"/><circle cx="298.85" cy="334.20" r="0.95"/><circle cx="298.85" cy="344.35" r="0.95"/><circle cx="298.85" cy="354.50" r="0.95"/><circle cx="298.85" cy="364.65" r="0.95"/><circle cx="298.85" cy="374.80" r="0.95"/><circle cx="298.85" cy="384.95" r="0.95"/><circle cx="298.85" cy="395.10" r="0.95"/><circle cx="309.00" cy="-0.75" r="0.95"/><circle cx="309.00" cy="9.40" r="0.95"/><circle cx="309.00" cy="19.55" r="0.95"/><circle cx="309.00" cy="29.70" r="0.95"/><circle cx="309.00" cy="39.85" r="0.95"/><circle cx="309.00" cy="50.00" r="0.95"/><circle cx="309.00" cy="60.15" r="0.95"/><circle cx="309.00" cy="70.30" r="0.95"/><circle cx="309.00" cy="80.45" r="0.95"/><circle cx="309.00" cy="90.60" r="0.95"/><circle cx="309.00" cy="100.75" r="0.95"/><circle cx="309.00" cy="110.90" r="0.95"/><circle cx="309.00" cy="121.05" r="0.95"/><circle cx="309.00" cy="131.20" r="0.95"/><circle cx="309.00" cy="141.35" r="0.95"/><circle cx="309.00" cy="151.50" r="0.95"/><circle cx="309.00" cy="202.25" r="0.95"/><circle cx="309.00" cy="212.40" r="0.95"/><circle cx="309.00" cy="222.55" r="0.95"/><circle cx="309.00" cy="232.70" r="0.95"/><circle cx="309.00" cy="242.85" r="0.95"/><circle cx="309.00" cy="253.00" r="0.95"/><circle cx="309.00" cy="263.15" r="0.95"/><circle cx="309.00" cy="273.30" r="0.95"/><circle cx="309.00" cy="283.45" r="0.95"/><circle cx="309.00" cy="293.60" r="0.95"/><circle cx="309.00" cy="303.75" r="0.95"/><circle cx="309.00" cy="313.90" r="0.95"/><circle cx="309.00" cy="324.05" r="0.95"/><circle cx="309.00" cy="334.20" r="0.95"/><circle cx="309.00" cy="344.35" r="0.95"/><circle cx="309.00" cy="354.50" r="0.95"/><circle cx="309.00" cy="364.65" r="0.95"/><circle cx="309.00" cy="374.80" r="0.95"/><circle cx="309.00" cy="384.95" r="0.95"/><circle cx="309.00" cy="395.10" r="0.95"/><circle cx="319.15" cy="-0.75" r="0.95"/><circle cx="319.15" cy="9.40" r="0.95"/><circle cx="319.15" cy="19.55" r="0.95"/><circle cx="319.15" cy="29.70" r="0.95"/><circle cx="319.15" cy="39.85" r="0.95"/><circle cx="319.15" cy="50.00" r="0.95"/><circle cx="319.15" cy="60.15" r="0.95"/><circle cx="319.15" cy="70.30" r="0.95"/><circle cx="319.15" cy="80.45" r="0.95"/><circle cx="319.15" cy="90.60" r="0.95"/><circle cx="319.15" cy="100.75" r="0.95"/><circle cx="319.15" cy="110.90" r="0.95"/><circle cx="319.15" cy="121.05" r="0.95"/><circle cx="319.15" cy="131.20" r="0.95"/><circle cx="319.15" cy="141.35" r="0.95"/><circle cx="319.15" cy="151.50" r="0.95"/><circle cx="319.15" cy="161.65" r="0.95"/><circle cx="319.15" cy="171.80" r="0.95"/><circle cx="319.15" cy="181.95" r="0.95"/><circle cx="319.15" cy="192.10" r="0.95"/><circle cx="319.15" cy="202.25" r="0.95"/><circle cx="319.15" cy="212.40" r="0.95"/><circle cx="319.15" cy="222.55" r="0.95"/><circle cx="319.15" cy="232.70" r="0.95"/><circle cx="319.15" cy="242.85" r="0.95"/><circle cx="319.15" cy="253.00" r="0.95"/><circle cx="319.15" cy="263.15" r="0.95"/><circle cx="319.15" cy="273.30" r="0.95"/><circle cx="319.15" cy="283.45" r="0.95"/><circle cx="319.15" cy="293.60" r="0.95"/><circle cx="319.15" cy="303.75" r="0.95"/><circle cx="319.15" cy="313.90" r="0.95"/><circle cx="319.15" cy="324.05" r="0.95"/><circle cx="319.15" cy="334.20" r="0.95"/><circle cx="319.15" cy="344.35" r="0.95"/><circle cx="319.15" cy="354.50" r="0.95"/><circle cx="319.15" cy="364.65" r="0.95"/><circle cx="319.15" cy="374.80" r="0.95"/><circle cx="319.15" cy="384.95" r="0.95"/><circle cx="319.15" cy="395.10" r="0.95"/><circle cx="329.30" cy="-0.75" r="0.95"/><circle cx="329.30" cy="9.40" r="0.95"/><circle cx="329.30" cy="19.55" r="0.95"/><circle cx="329.30" cy="29.70" r="0.95"/><circle cx="329.30" cy="39.85" r="0.95"/><circle cx="329.30" cy="50.00" r="0.95"/><circle cx="329.30" cy="60.15" r="0.95"/><circle cx="329.30" cy="70.30" r="0.95"/><circle cx="329.30" cy="80.45" r="0.95"/><circle cx="329.30" cy="90.60" r="0.95"/><circle cx="329.30" cy="100.75" r="0.95"/><circle cx="329.30" cy="110.90" r="0.95"/><circle cx="329.30" cy="121.05" r="0.95"/><circle cx="329.30" cy="131.20" r="0.95"/><circle cx="329.30" cy="141.35" r="0.95"/><circle cx="329.30" cy="151.50" r="0.95"/><circle cx="329.30" cy="161.65" r="0.95"/><circle cx="329.30" cy="171.80" r="0.95"/><circle cx="329.30" cy="181.95" r="0.95"/><circle cx="329.30" cy="192.10" r="0.95"/><circle cx="329.30" cy="202.25" r="0.95"/><circle cx="329.30" cy="212.40" r="0.95"/><circle cx="329.30" cy="222.55" r="0.95"/><circle cx="329.30" cy="232.70" r="0.95"/><circle cx="329.30" cy="242.85" r="0.95"/><circle cx="329.30" cy="253.00" r="0.95"/><circle cx="329.30" cy="263.15" r="0.95"/><circle cx="329.30" cy="273.30" r="0.95"/><circle cx="329.30" cy="283.45" r="0.95"/><circle cx="329.30" cy="293.60" r="0.95"/><circle cx="329.30" cy="303.75" r="0.95"/><circle cx="329.30" cy="313.90" r="0.95"/><circle cx="329.30" cy="324.05" r="0.95"/><circle cx="329.30" cy="334.20" r="0.95"/><circle cx="329.30" cy="344.35" r="0.95"/><circle cx="329.30" cy="354.50" r="0.95"/><circle cx="329.30" cy="364.65" r="0.95"/><circle cx="329.30" cy="374.80" r="0.95"/><circle cx="329.30" cy="384.95" r="0.95"/><circle cx="329.30" cy="395.10" r="0.95"/><circle cx="339.45" cy="-0.75" r="0.95"/><circle cx="339.45" cy="9.40" r="0.95"/><circle cx="339.45" cy="19.55" r="0.95"/><circle cx="339.45" cy="29.70" r="0.95"/><circle cx="339.45" cy="39.85" r="0.95"/><circle cx="339.45" cy="50.00" r="0.95"/><circle cx="339.45" cy="60.15" r="0.95"/><circle cx="339.45" cy="70.30" r="0.95"/><circle cx="339.45" cy="80.45" r="0.95"/><circle cx="339.45" cy="90.60" r="0.95"/><circle cx="339.45" cy="100.75" r="0.95"/><circle cx="339.45" cy="110.90" r="0.95"/><circle cx="339.45" cy="121.05" r="0.95"/><circle cx="339.45" cy="131.20" r="0.95"/><circle cx="339.45" cy="141.35" r="0.95"/><circle cx="339.45" cy="151.50" r="0.95"/><circle cx="339.45" cy="161.65" r="0.95"/><circle cx="339.45" cy="171.80" r="0.95"/><circle cx="339.45" cy="181.95" r="0.95"/><circle cx="339.45" cy="192.10" r="0.95"/><circle cx="339.45" cy="202.25" r="0.95"/><circle cx="339.45" cy="212.40" r="0.95"/><circle cx="339.45" cy="222.55" r="0.95"/><circle cx="339.45" cy="232.70" r="0.95"/><circle cx="339.45" cy="242.85" r="0.95"/><circle cx="339.45" cy="253.00" r="0.95"/><circle cx="339.45" cy="263.15" r="0.95"/><circle cx="339.45" cy="273.30" r="0.95"/><circle cx="339.45" cy="283.45" r="0.95"/><circle cx="339.45" cy="293.60" r="0.95"/><circle cx="339.45" cy="303.75" r="0.95"/><circle cx="339.45" cy="313.90" r="0.95"/><circle cx="339.45" cy="324.05" r="0.95"/><circle cx="339.45" cy="334.20" r="0.95"/><circle cx="339.45" cy="344.35" r="0.95"/><circle cx="339.45" cy="354.50" r="0.95"/><circle cx="339.45" cy="364.65" r="0.95"/><circle cx="339.45" cy="374.80" r="0.95"/><circle cx="339.45" cy="384.95" r="0.95"/><circle cx="339.45" cy="395.10" r="0.95"/><circle cx="349.60" cy="-0.75" r="0.95"/><circle cx="349.60" cy="9.40" r="0.95"/><circle cx="349.60" cy="19.55" r="0.95"/><circle cx="349.60" cy="29.70" r="0.95"/><circle cx="349.60" cy="39.85" r="0.95"/><circle cx="349.60" cy="50.00" r="0.95"/><circle cx="349.60" cy="60.15" r="0.95"/><circle cx="349.60" cy="70.30" r="0.95"/><circle cx="349.60" cy="80.45" r="0.95"/><circle cx="349.60" cy="90.60" r="0.95"/><circle cx="349.60" cy="100.75" r="0.95"/><circle cx="349.60" cy="110.90" r="0.95"/><circle cx="349.60" cy="121.05" r="0.95"/><circle cx="349.60" cy="131.20" r="0.95"/><circle cx="349.60" cy="141.35" r="0.95"/><circle cx="349.60" cy="151.50" r="0.95"/><circle cx="349.60" cy="202.25" r="0.95"/><circle cx="349.60" cy="212.40" r="0.95"/><circle cx="349.60" cy="222.55" r="0.95"/><circle cx="349.60" cy="232.70" r="0.95"/><circle cx="349.60" cy="242.85" r="0.95"/><circle cx="349.60" cy="253.00" r="0.95"/><circle cx="349.60" cy="263.15" r="0.95"/><circle cx="349.60" cy="273.30" r="0.95"/><circle cx="349.60" cy="283.45" r="0.95"/><circle cx="349.60" cy="293.60" r="0.95"/><circle cx="349.60" cy="303.75" r="0.95"/><circle cx="349.60" cy="313.90" r="0.95"/><circle cx="349.60" cy="324.05" r="0.95"/><circle cx="349.60" cy="334.20" r="0.95"/><circle cx="349.60" cy="344.35" r="0.95"/><circle cx="349.60" cy="354.50" r="0.95"/><circle cx="349.60" cy="364.65" r="0.95"/><circle cx="349.60" cy="374.80" r="0.95"/><circle cx="349.60" cy="384.95" r="0.95"/><circle cx="349.60" cy="395.10" r="0.95"/><circle cx="359.75" cy="-0.75" r="0.95"/><circle cx="359.75" cy="9.40" r="0.95"/><circle cx="359.75" cy="19.55" r="0.95"/><circle cx="359.75" cy="29.70" r="0.95"/><circle cx="359.75" cy="39.85" r="0.95"/><circle cx="359.75" cy="50.00" r="0.95"/><circle cx="359.75" cy="60.15" r="0.95"/><circle cx="359.75" cy="70.30" r="0.95"/><circle cx="359.75" cy="80.45" r="0.95"/><circle cx="359.75" cy="90.60" r="0.95"/><circle cx="359.75" cy="100.75" r="0.95"/><circle cx="359.75" cy="110.90" r="0.95"/><circle cx="359.75" cy="121.05" r="0.95"/><circle cx="359.75" cy="131.20" r="0.95"/><circle cx="359.75" cy="141.35" r="0.95"/><circle cx="359.75" cy="151.50" r="0.95"/><circle cx="359.75" cy="202.25" r="0.95"/><circle cx="359.75" cy="212.40" r="0.95"/><circle cx="359.75" cy="222.55" r="0.95"/><circle cx="359.75" cy="232.70" r="0.95"/><circle cx="359.75" cy="242.85" r="0.95"/><circle cx="359.75" cy="253.00" r="0.95"/><circle cx="359.75" cy="263.15" r="0.95"/><circle cx="359.75" cy="273.30" r="0.95"/><circle cx="359.75" cy="283.45" r="0.95"/><circle cx="359.75" cy="293.60" r="0.95"/><circle cx="359.75" cy="303.75" r="0.95"/><circle cx="359.75" cy="313.90" r="0.95"/><circle cx="359.75" cy="324.05" r="0.95"/><circle cx="359.75" cy="334.20" r="0.95"/><circle cx="359.75" cy="344.35" r="0.95"/><circle cx="359.75" cy="354.50" r="0.95"/><circle cx="359.75" cy="364.65" r="0.95"/><circle cx="359.75" cy="374.80" r="0.95"/><circle cx="359.75" cy="384.95" r="0.95"/><circle cx="359.75" cy="395.10" r="0.95"/><circle cx="369.90" cy="-0.75" r="0.95"/><circle cx="369.90" cy="9.40" r="0.95"/><circle cx="369.90" cy="19.55" r="0.95"/><circle cx="369.90" cy="29.70" r="0.95"/><circle cx="369.90" cy="39.85" r="0.95"/><circle cx="369.90" cy="50.00" r="0.95"/><circle cx="369.90" cy="60.15" r="0.95"/><circle cx="369.90" cy="70.30" r="0.95"/><circle cx="369.90" cy="80.45" r="0.95"/><circle cx="369.90" cy="90.60" r="0.95"/><circle cx="369.90" cy="100.75" r="0.95"/><circle cx="369.90" cy="110.90" r="0.95"/><circle cx="369.90" cy="121.05" r="0.95"/><circle cx="369.90" cy="131.20" r="0.95"/><circle cx="369.90" cy="141.35" r="0.95"/><circle cx="369.90" cy="151.50" r="0.95"/><circle cx="369.90" cy="202.25" r="0.95"/><circle cx="369.90" cy="212.40" r="0.95"/><circle cx="369.90" cy="222.55" r="0.95"/><circle cx="369.90" cy="232.70" r="0.95"/><circle cx="369.90" cy="242.85" r="0.95"/><circle cx="369.90" cy="253.00" r="0.95"/><circle cx="369.90" cy="263.15" r="0.95"/><circle cx="369.90" cy="273.30" r="0.95"/><circle cx="369.90" cy="283.45" r="0.95"/><circle cx="369.90" cy="293.60" r="0.95"/><circle cx="369.90" cy="303.75" r="0.95"/><circle cx="369.90" cy="313.90" r="0.95"/><circle cx="369.90" cy="324.05" r="0.95"/><circle cx="369.90" cy="334.20" r="0.95"/><circle cx="369.90" cy="344.35" r="0.95"/><circle cx="369.90" cy="354.50" r="0.95"/><circle cx="369.90" cy="364.65" r="0.95"/><circle cx="369.90" cy="374.80" r="0.95"/><circle cx="369.90" cy="384.95" r="0.95"/><circle cx="369.90" cy="395.10" r="0.95"/><circle cx="380.05" cy="-0.75" r="0.95"/><circle cx="380.05" cy="9.40" r="0.95"/><circle cx="380.05" cy="19.55" r="0.95"/><circle cx="380.05" cy="29.70" r="0.95"/><circle cx="380.05" cy="39.85" r="0.95"/><circle cx="380.05" cy="50.00" r="0.95"/><circle cx="380.05" cy="60.15" r="0.95"/><circle cx="380.05" cy="70.30" r="0.95"/><circle cx="380.05" cy="80.45" r="0.95"/><circle cx="380.05" cy="90.60" r="0.95"/><circle cx="380.05" cy="100.75" r="0.95"/><circle cx="380.05" cy="110.90" r="0.95"/><circle cx="380.05" cy="121.05" r="0.95"/><circle cx="380.05" cy="131.20" r="0.95"/><circle cx="380.05" cy="141.35" r="0.95"/><circle cx="380.05" cy="151.50" r="0.95"/><circle cx="380.05" cy="202.25" r="0.95"/><circle cx="380.05" cy="212.40" r="0.95"/><circle cx="380.05" cy="222.55" r="0.95"/><circle cx="380.05" cy="232.70" r="0.95"/><circle cx="380.05" cy="242.85" r="0.95"/><circle cx="380.05" cy="253.00" r="0.95"/><circle cx="380.05" cy="263.15" r="0.95"/><circle cx="380.05" cy="273.30" r="0.95"/><circle cx="380.05" cy="283.45" r="0.95"/><circle cx="380.05" cy="293.60" r="0.95"/><circle cx="380.05" cy="303.75" r="0.95"/><circle cx="380.05" cy="313.90" r="0.95"/><circle cx="380.05" cy="324.05" r="0.95"/><circle cx="380.05" cy="334.20" r="0.95"/><circle cx="380.05" cy="344.35" r="0.95"/><circle cx="380.05" cy="354.50" r="0.95"/><circle cx="380.05" cy="364.65" r="0.95"/><circle cx="380.05" cy="374.80" r="0.95"/><circle cx="380.05" cy="384.95" r="0.95"/><circle cx="380.05" cy="395.10" r="0.95"/><circle cx="390.20" cy="-0.75" r="0.95"/><circle cx="390.20" cy="9.40" r="0.95"/><circle cx="390.20" cy="19.55" r="0.95"/><circle cx="390.20" cy="29.70" r="0.95"/><circle cx="390.20" cy="39.85" r="0.95"/><circle cx="390.20" cy="50.00" r="0.95"/><circle cx="390.20" cy="60.15" r="0.95"/><circle cx="390.20" cy="70.30" r="0.95"/><circle cx="390.20" cy="80.45" r="0.95"/><circle cx="390.20" cy="90.60" r="0.95"/><circle cx="390.20" cy="100.75" r="0.95"/><circle cx="390.20" cy="110.90" r="0.95"/><circle cx="390.20" cy="121.05" r="0.95"/><circle cx="390.20" cy="131.20" r="0.95"/><circle cx="390.20" cy="141.35" r="0.95"/><circle cx="390.20" cy="151.50" r="0.95"/><circle cx="390.20" cy="202.25" r="0.95"/><circle cx="390.20" cy="212.40" r="0.95"/><circle cx="390.20" cy="222.55" r="0.95"/><circle cx="390.20" cy="232.70" r="0.95"/><circle cx="390.20" cy="242.85" r="0.95"/><circle cx="390.20" cy="253.00" r="0.95"/><circle cx="390.20" cy="263.15" r="0.95"/><circle cx="390.20" cy="273.30" r="0.95"/><circle cx="390.20" cy="283.45" r="0.95"/><circle cx="390.20" cy="293.60" r="0.95"/><circle cx="390.20" cy="303.75" r="0.95"/><circle cx="390.20" cy="313.90" r="0.95"/><circle cx="390.20" cy="324.05" r="0.95"/><circle cx="390.20" cy="334.20" r="0.95"/><circle cx="390.20" cy="344.35" r="0.95"/><circle cx="390.20" cy="354.50" r="0.95"/><circle cx="390.20" cy="364.65" r="0.95"/><circle cx="390.20" cy="374.80" r="0.95"/><circle cx="390.20" cy="384.95" r="0.95"/><circle cx="390.20" cy="395.10" r="0.95"/><circle cx="400.35" cy="-0.75" r="0.95"/><circle cx="400.35" cy="9.40" r="0.95"/><circle cx="400.35" cy="19.55" r="0.95"/><circle cx="400.35" cy="29.70" r="0.95"/><circle cx="400.35" cy="39.85" r="0.95"/><circle cx="400.35" cy="50.00" r="0.95"/><circle cx="400.35" cy="60.15" r="0.95"/><circle cx="400.35" cy="70.30" r="0.95"/><circle cx="400.35" cy="80.45" r="0.95"/><circle cx="400.35" cy="90.60" r="0.95"/><circle cx="400.35" cy="100.75" r="0.95"/><circle cx="400.35" cy="110.90" r="0.95"/><circle cx="400.35" cy="121.05" r="0.95"/><circle cx="400.35" cy="131.20" r="0.95"/><circle cx="400.35" cy="141.35" r="0.95"/><circle cx="400.35" cy="151.50" r="0.95"/><circle cx="400.35" cy="202.25" r="0.95"/><circle cx="400.35" cy="212.40" r="0.95"/><circle cx="400.35" cy="222.55" r="0.95"/><circle cx="400.35" cy="232.70" r="0.95"/><circle cx="400.35" cy="242.85" r="0.95"/><circle cx="400.35" cy="253.00" r="0.95"/><circle cx="400.35" cy="263.15" r="0.95"/><circle cx="400.35" cy="273.30" r="0.95"/><circle cx="400.35" cy="283.45" r="0.95"/><circle cx="400.35" cy="293.60" r="0.95"/><circle cx="400.35" cy="303.75" r="0.95"/><circle cx="400.35" cy="313.90" r="0.95"/><circle cx="400.35" cy="324.05" r="0.95"/><circle cx="400.35" cy="334.20" r="0.95"/><circle cx="400.35" cy="344.35" r="0.95"/><circle cx="400.35" cy="354.50" r="0.95"/><circle cx="400.35" cy="364.65" r="0.95"/><circle cx="400.35" cy="374.80" r="0.95"/><circle cx="400.35" cy="384.95" r="0.95"/><circle cx="400.35" cy="395.10" r="0.95"/><circle cx="410.50" cy="-0.75" r="0.95"/><circle cx="410.50" cy="9.40" r="0.95"/><circle cx="410.50" cy="19.55" r="0.95"/><circle cx="410.50" cy="29.70" r="0.95"/><circle cx="410.50" cy="39.85" r="0.95"/><circle cx="410.50" cy="50.00" r="0.95"/><circle cx="410.50" cy="60.15" r="0.95"/><circle cx="410.50" cy="70.30" r="0.95"/><circle cx="410.50" cy="80.45" r="0.95"/><circle cx="410.50" cy="90.60" r="0.95"/><circle cx="410.50" cy="100.75" r="0.95"/><circle cx="410.50" cy="110.90" r="0.95"/><circle cx="410.50" cy="121.05" r="0.95"/><circle cx="410.50" cy="131.20" r="0.95"/><circle cx="410.50" cy="141.35" r="0.95"/><circle cx="410.50" cy="151.50" r="0.95"/><circle cx="410.50" cy="161.65" r="0.95"/><circle cx="410.50" cy="171.80" r="0.95"/><circle cx="410.50" cy="181.95" r="0.95"/><circle cx="410.50" cy="192.10" r="0.95"/><circle cx="410.50" cy="202.25" r="0.95"/><circle cx="410.50" cy="212.40" r="0.95"/><circle cx="410.50" cy="222.55" r="0.95"/><circle cx="410.50" cy="232.70" r="0.95"/><circle cx="410.50" cy="242.85" r="0.95"/><circle cx="410.50" cy="253.00" r="0.95"/><circle cx="410.50" cy="263.15" r="0.95"/><circle cx="410.50" cy="273.30" r="0.95"/><circle cx="410.50" cy="283.45" r="0.95"/><circle cx="410.50" cy="293.60" r="0.95"/><circle cx="410.50" cy="303.75" r="0.95"/><circle cx="410.50" cy="313.90" r="0.95"/><circle cx="410.50" cy="324.05" r="0.95"/><circle cx="410.50" cy="334.20" r="0.95"/><circle cx="410.50" cy="344.35" r="0.95"/><circle cx="410.50" cy="354.50" r="0.95"/><circle cx="410.50" cy="364.65" r="0.95"/><circle cx="410.50" cy="374.80" r="0.95"/><circle cx="410.50" cy="384.95" r="0.95"/><circle cx="410.50" cy="395.10" r="0.95"/><circle cx="420.65" cy="-0.75" r="0.95"/><circle cx="420.65" cy="9.40" r="0.95"/><circle cx="420.65" cy="19.55" r="0.95"/><circle cx="420.65" cy="29.70" r="0.95"/><circle cx="420.65" cy="39.85" r="0.95"/><circle cx="420.65" cy="50.00" r="0.95"/><circle cx="420.65" cy="60.15" r="0.95"/><circle cx="420.65" cy="70.30" r="0.95"/><circle cx="420.65" cy="80.45" r="0.95"/><circle cx="420.65" cy="90.60" r="0.95"/><circle cx="420.65" cy="100.75" r="0.95"/><circle cx="420.65" cy="110.90" r="0.95"/><circle cx="420.65" cy="121.05" r="0.95"/><circle cx="420.65" cy="131.20" r="0.95"/><circle cx="420.65" cy="141.35" r="0.95"/><circle cx="420.65" cy="151.50" r="0.95"/><circle cx="420.65" cy="161.65" r="0.95"/><circle cx="420.65" cy="171.80" r="0.95"/><circle cx="420.65" cy="181.95" r="0.95"/><circle cx="420.65" cy="192.10" r="0.95"/><circle cx="420.65" cy="202.25" r="0.95"/><circle cx="420.65" cy="212.40" r="0.95"/><circle cx="420.65" cy="222.55" r="0.95"/><circle cx="420.65" cy="232.70" r="0.95"/><circle cx="420.65" cy="242.85" r="0.95"/><circle cx="420.65" cy="253.00" r="0.95"/><circle cx="420.65" cy="263.15" r="0.95"/><circle cx="420.65" cy="273.30" r="0.95"/><circle cx="420.65" cy="283.45" r="0.95"/><circle cx="420.65" cy="293.60" r="0.95"/><circle cx="420.65" cy="303.75" r="0.95"/><circle cx="420.65" cy="313.90" r="0.95"/><circle cx="420.65" cy="324.05" r="0.95"/><circle cx="420.65" cy="334.20" r="0.95"/><circle cx="420.65" cy="344.35" r="0.95"/><circle cx="420.65" cy="354.50" r="0.95"/><circle cx="420.65" cy="364.65" r="0.95"/><circle cx="420.65" cy="374.80" r="0.95"/><circle cx="420.65" cy="384.95" r="0.95"/><circle cx="420.65" cy="395.10" r="0.95"/><circle cx="430.80" cy="-0.75" r="0.95"/><circle cx="430.80" cy="9.40" r="0.95"/><circle cx="430.80" cy="19.55" r="0.95"/><circle cx="430.80" cy="29.70" r="0.95"/><circle cx="430.80" cy="39.85" r="0.95"/><circle cx="430.80" cy="50.00" r="0.95"/><circle cx="430.80" cy="60.15" r="0.95"/><circle cx="430.80" cy="70.30" r="0.95"/><circle cx="430.80" cy="80.45" r="0.95"/><circle cx="430.80" cy="90.60" r="0.95"/><circle cx="430.80" cy="100.75" r="0.95"/><circle cx="430.80" cy="110.90" r="0.95"/><circle cx="430.80" cy="121.05" r="0.95"/><circle cx="430.80" cy="131.20" r="0.95"/><circle cx="430.80" cy="141.35" r="0.95"/><circle cx="430.80" cy="151.50" r="0.95"/><circle cx="430.80" cy="161.65" r="0.95"/><circle cx="430.80" cy="171.80" r="0.95"/><circle cx="430.80" cy="181.95" r="0.95"/><circle cx="430.80" cy="192.10" r="0.95"/><circle cx="430.80" cy="202.25" r="0.95"/><circle cx="430.80" cy="212.40" r="0.95"/><circle cx="430.80" cy="222.55" r="0.95"/><circle cx="430.80" cy="232.70" r="0.95"/><circle cx="430.80" cy="242.85" r="0.95"/><circle cx="430.80" cy="253.00" r="0.95"/><circle cx="430.80" cy="263.15" r="0.95"/><circle cx="430.80" cy="273.30" r="0.95"/><circle cx="430.80" cy="283.45" r="0.95"/><circle cx="430.80" cy="293.60" r="0.95"/><circle cx="430.80" cy="303.75" r="0.95"/><circle cx="430.80" cy="313.90" r="0.95"/><circle cx="430.80" cy="324.05" r="0.95"/><circle cx="430.80" cy="334.20" r="0.95"/><circle cx="430.80" cy="344.35" r="0.95"/><circle cx="430.80" cy="354.50" r="0.95"/><circle cx="430.80" cy="364.65" r="0.95"/><circle cx="430.80" cy="374.80" r="0.95"/><circle cx="430.80" cy="384.95" r="0.95"/><circle cx="430.80" cy="395.10" r="0.95"/><circle cx="440.95" cy="-0.75" r="0.95"/><circle cx="440.95" cy="9.40" r="0.95"/><circle cx="440.95" cy="19.55" r="0.95"/><circle cx="440.95" cy="29.70" r="0.95"/><circle cx="440.95" cy="39.85" r="0.95"/><circle cx="440.95" cy="50.00" r="0.95"/><circle cx="440.95" cy="60.15" r="0.95"/><circle cx="440.95" cy="70.30" r="0.95"/><circle cx="440.95" cy="80.45" r="0.95"/><circle cx="440.95" cy="90.60" r="0.95"/><circle cx="440.95" cy="100.75" r="0.95"/><circle cx="440.95" cy="110.90" r="0.95"/><circle cx="440.95" cy="121.05" r="0.95"/><circle cx="440.95" cy="131.20" r="0.95"/><circle cx="440.95" cy="141.35" r="0.95"/><circle cx="440.95" cy="151.50" r="0.95"/><circle cx="440.95" cy="161.65" r="0.95"/><circle cx="440.95" cy="171.80" r="0.95"/><circle cx="440.95" cy="181.95" r="0.95"/><circle cx="440.95" cy="192.10" r="0.95"/><circle cx="440.95" cy="202.25" r="0.95"/><circle cx="440.95" cy="212.40" r="0.95"/><circle cx="440.95" cy="222.55" r="0.95"/><circle cx="440.95" cy="232.70" r="0.95"/><circle cx="440.95" cy="242.85" r="0.95"/><circle cx="440.95" cy="253.00" r="0.95"/><circle cx="440.95" cy="263.15" r="0.95"/><circle cx="440.95" cy="273.30" r="0.95"/><circle cx="440.95" cy="283.45" r="0.95"/><circle cx="440.95" cy="293.60" r="0.95"/><circle cx="440.95" cy="303.75" r="0.95"/><circle cx="440.95" cy="313.90" r="0.95"/><circle cx="440.95" cy="324.05" r="0.95"/><circle cx="440.95" cy="334.20" r="0.95"/><circle cx="440.95" cy="344.35" r="0.95"/><circle cx="440.95" cy="354.50" r="0.95"/><circle cx="440.95" cy="364.65" r="0.95"/><circle cx="440.95" cy="374.80" r="0.95"/><circle cx="440.95" cy="384.95" r="0.95"/><circle cx="440.95" cy="395.10" r="0.95"/><circle cx="451.10" cy="-0.75" r="0.95"/><circle cx="451.10" cy="9.40" r="0.95"/><circle cx="451.10" cy="19.55" r="0.95"/><circle cx="451.10" cy="29.70" r="0.95"/><circle cx="451.10" cy="39.85" r="0.95"/><circle cx="451.10" cy="50.00" r="0.95"/><circle cx="451.10" cy="60.15" r="0.95"/><circle cx="451.10" cy="70.30" r="0.95"/><circle cx="451.10" cy="80.45" r="0.95"/><circle cx="451.10" cy="90.60" r="0.95"/><circle cx="451.10" cy="100.75" r="0.95"/><circle cx="451.10" cy="110.90" r="0.95"/><circle cx="451.10" cy="121.05" r="0.95"/><circle cx="451.10" cy="131.20" r="0.95"/><circle cx="451.10" cy="141.35" r="0.95"/><circle cx="451.10" cy="151.50" r="0.95"/><circle cx="451.10" cy="161.65" r="0.95"/><circle cx="451.10" cy="171.80" r="0.95"/><circle cx="451.10" cy="181.95" r="0.95"/><circle cx="451.10" cy="192.10" r="0.95"/><circle cx="451.10" cy="202.25" r="0.95"/><circle cx="451.10" cy="212.40" r="0.95"/><circle cx="451.10" cy="222.55" r="0.95"/><circle cx="451.10" cy="232.70" r="0.95"/><circle cx="451.10" cy="242.85" r="0.95"/><circle cx="451.10" cy="253.00" r="0.95"/><circle cx="451.10" cy="263.15" r="0.95"/><circle cx="451.10" cy="273.30" r="0.95"/><circle cx="451.10" cy="283.45" r="0.95"/><circle cx="451.10" cy="293.60" r="0.95"/><circle cx="451.10" cy="303.75" r="0.95"/><circle cx="451.10" cy="313.90" r="0.95"/><circle cx="451.10" cy="324.05" r="0.95"/><circle cx="451.10" cy="334.20" r="0.95"/><circle cx="451.10" cy="344.35" r="0.95"/><circle cx="451.10" cy="354.50" r="0.95"/><circle cx="451.10" cy="364.65" r="0.95"/><circle cx="451.10" cy="374.80" r="0.95"/><circle cx="451.10" cy="384.95" r="0.95"/><circle cx="451.10" cy="395.10" r="0.95"/><circle cx="461.25" cy="-0.75" r="0.95"/><circle cx="461.25" cy="9.40" r="0.95"/><circle cx="461.25" cy="19.55" r="0.95"/><circle cx="461.25" cy="29.70" r="0.95"/><circle cx="461.25" cy="39.85" r="0.95"/><circle cx="461.25" cy="50.00" r="0.95"/><circle cx="461.25" cy="60.15" r="0.95"/><circle cx="461.25" cy="70.30" r="0.95"/><circle cx="461.25" cy="80.45" r="0.95"/><circle cx="461.25" cy="90.60" r="0.95"/><circle cx="461.25" cy="100.75" r="0.95"/><circle cx="461.25" cy="110.90" r="0.95"/><circle cx="461.25" cy="121.05" r="0.95"/><circle cx="461.25" cy="131.20" r="0.95"/><circle cx="461.25" cy="141.35" r="0.95"/><circle cx="461.25" cy="151.50" r="0.95"/><circle cx="461.25" cy="161.65" r="0.95"/><circle cx="461.25" cy="171.80" r="0.95"/><circle cx="461.25" cy="181.95" r="0.95"/><circle cx="461.25" cy="192.10" r="0.95"/><circle cx="461.25" cy="202.25" r="0.95"/><circle cx="461.25" cy="212.40" r="0.95"/><circle cx="461.25" cy="222.55" r="0.95"/><circle cx="461.25" cy="232.70" r="0.95"/><circle cx="461.25" cy="242.85" r="0.95"/><circle cx="461.25" cy="253.00" r="0.95"/><circle cx="461.25" cy="263.15" r="0.95"/><circle cx="461.25" cy="273.30" r="0.95"/><circle cx="461.25" cy="283.45" r="0.95"/><circle cx="461.25" cy="293.60" r="0.95"/><circle cx="461.25" cy="303.75" r="0.95"/><circle cx="461.25" cy="313.90" r="0.95"/><circle cx="461.25" cy="324.05" r="0.95"/><circle cx="461.25" cy="334.20" r="0.95"/><circle cx="461.25" cy="344.35" r="0.95"/><circle cx="461.25" cy="354.50" r="0.95"/><circle cx="461.25" cy="364.65" r="0.95"/><circle cx="461.25" cy="374.80" r="0.95"/><circle cx="461.25" cy="384.95" r="0.95"/><circle cx="461.25" cy="395.10" r="0.95"/><circle cx="471.40" cy="-0.75" r="0.95"/><circle cx="471.40" cy="9.40" r="0.95"/><circle cx="471.40" cy="19.55" r="0.95"/><circle cx="471.40" cy="29.70" r="0.95"/><circle cx="471.40" cy="39.85" r="0.95"/><circle cx="471.40" cy="50.00" r="0.95"/><circle cx="471.40" cy="60.15" r="0.95"/><circle cx="471.40" cy="70.30" r="0.95"/><circle cx="471.40" cy="80.45" r="0.95"/><circle cx="471.40" cy="90.60" r="0.95"/><circle cx="471.40" cy="100.75" r="0.95"/><circle cx="471.40" cy="110.90" r="0.95"/><circle cx="471.40" cy="121.05" r="0.95"/><circle cx="471.40" cy="131.20" r="0.95"/><circle cx="471.40" cy="141.35" r="0.95"/><circle cx="471.40" cy="151.50" r="0.95"/><circle cx="471.40" cy="161.65" r="0.95"/><circle cx="471.40" cy="171.80" r="0.95"/><circle cx="471.40" cy="181.95" r="0.95"/><circle cx="471.40" cy="192.10" r="0.95"/><circle cx="471.40" cy="202.25" r="0.95"/><circle cx="471.40" cy="212.40" r="0.95"/><circle cx="471.40" cy="222.55" r="0.95"/><circle cx="471.40" cy="232.70" r="0.95"/><circle cx="471.40" cy="242.85" r="0.95"/><circle cx="471.40" cy="253.00" r="0.95"/><circle cx="471.40" cy="263.15" r="0.95"/><circle cx="471.40" cy="273.30" r="0.95"/><circle cx="471.40" cy="283.45" r="0.95"/><circle cx="471.40" cy="293.60" r="0.95"/><circle cx="471.40" cy="303.75" r="0.95"/><circle cx="471.40" cy="313.90" r="0.95"/><circle cx="471.40" cy="324.05" r="0.95"/><circle cx="471.40" cy="334.20" r="0.95"/><circle cx="471.40" cy="344.35" r="0.95"/><circle cx="471.40" cy="354.50" r="0.95"/><circle cx="471.40" cy="364.65" r="0.95"/><circle cx="471.40" cy="374.80" r="0.95"/><circle cx="471.40" cy="384.95" r="0.95"/><circle cx="471.40" cy="395.10" r="0.95"/><circle cx="481.55" cy="-0.75" r="0.95"/><circle cx="481.55" cy="9.40" r="0.95"/><circle cx="481.55" cy="19.55" r="0.95"/><circle cx="481.55" cy="29.70" r="0.95"/><circle cx="481.55" cy="39.85" r="0.95"/><circle cx="481.55" cy="50.00" r="0.95"/><circle cx="481.55" cy="60.15" r="0.95"/><circle cx="481.55" cy="70.30" r="0.95"/><circle cx="481.55" cy="80.45" r="0.95"/><circle cx="481.55" cy="90.60" r="0.95"/><circle cx="481.55" cy="100.75" r="0.95"/><circle cx="481.55" cy="110.90" r="0.95"/><circle cx="481.55" cy="121.05" r="0.95"/><circle cx="481.55" cy="131.20" r="0.95"/><circle cx="481.55" cy="141.35" r="0.95"/><circle cx="481.55" cy="151.50" r="0.95"/><circle cx="481.55" cy="161.65" r="0.95"/><circle cx="481.55" cy="171.80" r="0.95"/><circle cx="481.55" cy="181.95" r="0.95"/><circle cx="481.55" cy="192.10" r="0.95"/><circle cx="481.55" cy="202.25" r="0.95"/><circle cx="481.55" cy="212.40" r="0.95"/><circle cx="481.55" cy="222.55" r="0.95"/><circle cx="481.55" cy="232.70" r="0.95"/><circle cx="481.55" cy="242.85" r="0.95"/><circle cx="481.55" cy="253.00" r="0.95"/><circle cx="481.55" cy="263.15" r="0.95"/><circle cx="481.55" cy="273.30" r="0.95"/><circle cx="481.55" cy="283.45" r="0.95"/><circle cx="481.55" cy="293.60" r="0.95"/><circle cx="481.55" cy="303.75" r="0.95"/><circle cx="481.55" cy="313.90" r="0.95"/><circle cx="481.55" cy="324.05" r="0.95"/><circle cx="481.55" cy="334.20" r="0.95"/><circle cx="481.55" cy="344.35" r="0.95"/><circle cx="481.55" cy="354.50" r="0.95"/><circle cx="481.55" cy="364.65" r="0.95"/><circle cx="481.55" cy="374.80" r="0.95"/><circle cx="481.55" cy="384.95" r="0.95"/><circle cx="481.55" cy="395.10" r="0.95"/><circle cx="674.40" cy="-0.75" r="0.95"/><circle cx="674.40" cy="9.40" r="0.95"/><circle cx="674.40" cy="19.55" r="0.95"/><circle cx="674.40" cy="29.70" r="0.95"/><circle cx="674.40" cy="39.85" r="0.95"/><circle cx="674.40" cy="50.00" r="0.95"/><circle cx="674.40" cy="60.15" r="0.95"/><circle cx="674.40" cy="70.30" r="0.95"/><circle cx="674.40" cy="80.45" r="0.95"/><circle cx="674.40" cy="90.60" r="0.95"/><circle cx="674.40" cy="100.75" r="0.95"/><circle cx="674.40" cy="110.90" r="0.95"/><circle cx="674.40" cy="121.05" r="0.95"/><circle cx="674.40" cy="131.20" r="0.95"/><circle cx="674.40" cy="141.35" r="0.95"/><circle cx="674.40" cy="151.50" r="0.95"/><circle cx="674.40" cy="161.65" r="0.95"/><circle cx="674.40" cy="171.80" r="0.95"/><circle cx="674.40" cy="181.95" r="0.95"/><circle cx="674.40" cy="192.10" r="0.95"/><circle cx="674.40" cy="202.25" r="0.95"/><circle cx="674.40" cy="212.40" r="0.95"/><circle cx="674.40" cy="222.55" r="0.95"/><circle cx="674.40" cy="232.70" r="0.95"/><circle cx="674.40" cy="242.85" r="0.95"/><circle cx="674.40" cy="253.00" r="0.95"/><circle cx="674.40" cy="263.15" r="0.95"/><circle cx="674.40" cy="273.30" r="0.95"/><circle cx="674.40" cy="283.45" r="0.95"/><circle cx="674.40" cy="293.60" r="0.95"/><circle cx="674.40" cy="303.75" r="0.95"/><circle cx="674.40" cy="313.90" r="0.95"/><circle cx="674.40" cy="324.05" r="0.95"/><circle cx="674.40" cy="334.20" r="0.95"/><circle cx="674.40" cy="344.35" r="0.95"/><circle cx="674.40" cy="354.50" r="0.95"/><circle cx="674.40" cy="364.65" r="0.95"/><circle cx="674.40" cy="374.80" r="0.95"/><circle cx="674.40" cy="384.95" r="0.95"/><circle cx="674.40" cy="395.10" r="0.95"/><circle cx="684.55" cy="-0.75" r="0.95"/><circle cx="684.55" cy="9.40" r="0.95"/><circle cx="684.55" cy="19.55" r="0.95"/><circle cx="684.55" cy="29.70" r="0.95"/><circle cx="684.55" cy="39.85" r="0.95"/><circle cx="684.55" cy="50.00" r="0.95"/><circle cx="684.55" cy="60.15" r="0.95"/><circle cx="684.55" cy="70.30" r="0.95"/><circle cx="684.55" cy="80.45" r="0.95"/><circle cx="684.55" cy="90.60" r="0.95"/><circle cx="684.55" cy="100.75" r="0.95"/><circle cx="684.55" cy="110.90" r="0.95"/><circle cx="684.55" cy="121.05" r="0.95"/><circle cx="684.55" cy="131.20" r="0.95"/><circle cx="684.55" cy="141.35" r="0.95"/><circle cx="684.55" cy="151.50" r="0.95"/><circle cx="684.55" cy="161.65" r="0.95"/><circle cx="684.55" cy="171.80" r="0.95"/><circle cx="684.55" cy="181.95" r="0.95"/><circle cx="684.55" cy="192.10" r="0.95"/><circle cx="684.55" cy="202.25" r="0.95"/><circle cx="684.55" cy="212.40" r="0.95"/><circle cx="684.55" cy="222.55" r="0.95"/><circle cx="684.55" cy="232.70" r="0.95"/><circle cx="684.55" cy="242.85" r="0.95"/><circle cx="684.55" cy="253.00" r="0.95"/><circle cx="684.55" cy="263.15" r="0.95"/><circle cx="684.55" cy="273.30" r="0.95"/><circle cx="684.55" cy="283.45" r="0.95"/><circle cx="684.55" cy="293.60" r="0.95"/><circle cx="684.55" cy="303.75" r="0.95"/><circle cx="684.55" cy="313.90" r="0.95"/><circle cx="684.55" cy="324.05" r="0.95"/><circle cx="684.55" cy="334.20" r="0.95"/><circle cx="684.55" cy="344.35" r="0.95"/><circle cx="684.55" cy="354.50" r="0.95"/><circle cx="684.55" cy="364.65" r="0.95"/><circle cx="684.55" cy="374.80" r="0.95"/><circle cx="684.55" cy="384.95" r="0.95"/><circle cx="684.55" cy="395.10" r="0.95"/><circle cx="694.70" cy="-0.75" r="0.95"/><circle cx="694.70" cy="9.40" r="0.95"/><circle cx="694.70" cy="19.55" r="0.95"/><circle cx="694.70" cy="29.70" r="0.95"/><circle cx="694.70" cy="39.85" r="0.95"/><circle cx="694.70" cy="50.00" r="0.95"/><circle cx="694.70" cy="60.15" r="0.95"/><circle cx="694.70" cy="70.30" r="0.95"/><circle cx="694.70" cy="80.45" r="0.95"/><circle cx="694.70" cy="90.60" r="0.95"/><circle cx="694.70" cy="100.75" r="0.95"/><circle cx="694.70" cy="110.90" r="0.95"/><circle cx="694.70" cy="121.05" r="0.95"/><circle cx="694.70" cy="131.20" r="0.95"/><circle cx="694.70" cy="141.35" r="0.95"/><circle cx="694.70" cy="151.50" r="0.95"/><circle cx="694.70" cy="161.65" r="0.95"/><circle cx="694.70" cy="171.80" r="0.95"/><circle cx="694.70" cy="181.95" r="0.95"/><circle cx="694.70" cy="192.10" r="0.95"/><circle cx="694.70" cy="202.25" r="0.95"/><circle cx="694.70" cy="212.40" r="0.95"/><circle cx="694.70" cy="222.55" r="0.95"/><circle cx="694.70" cy="232.70" r="0.95"/><circle cx="694.70" cy="242.85" r="0.95"/><circle cx="694.70" cy="253.00" r="0.95"/><circle cx="694.70" cy="263.15" r="0.95"/><circle cx="694.70" cy="273.30" r="0.95"/><circle cx="694.70" cy="283.45" r="0.95"/><circle cx="694.70" cy="293.60" r="0.95"/><circle cx="694.70" cy="303.75" r="0.95"/><circle cx="694.70" cy="313.90" r="0.95"/><circle cx="694.70" cy="324.05" r="0.95"/><circle cx="694.70" cy="334.20" r="0.95"/><circle cx="694.70" cy="344.35" r="0.95"/><circle cx="694.70" cy="354.50" r="0.95"/><circle cx="694.70" cy="364.65" r="0.95"/><circle cx="694.70" cy="374.80" r="0.95"/><circle cx="694.70" cy="384.95" r="0.95"/><circle cx="694.70" cy="395.10" r="0.95"/><circle cx="704.85" cy="-0.75" r="0.95"/><circle cx="704.85" cy="9.40" r="0.95"/><circle cx="704.85" cy="19.55" r="0.95"/><circle cx="704.85" cy="29.70" r="0.95"/><circle cx="704.85" cy="39.85" r="0.95"/><circle cx="704.85" cy="50.00" r="0.95"/><circle cx="704.85" cy="60.15" r="0.95"/><circle cx="704.85" cy="70.30" r="0.95"/><circle cx="704.85" cy="80.45" r="0.95"/><circle cx="704.85" cy="90.60" r="0.95"/><circle cx="704.85" cy="100.75" r="0.95"/><circle cx="704.85" cy="110.90" r="0.95"/><circle cx="704.85" cy="121.05" r="0.95"/><circle cx="704.85" cy="131.20" r="0.95"/><circle cx="704.85" cy="141.35" r="0.95"/><circle cx="704.85" cy="151.50" r="0.95"/><circle cx="704.85" cy="161.65" r="0.95"/><circle cx="704.85" cy="171.80" r="0.95"/><circle cx="704.85" cy="181.95" r="0.95"/><circle cx="704.85" cy="192.10" r="0.95"/><circle cx="704.85" cy="202.25" r="0.95"/><circle cx="704.85" cy="212.40" r="0.95"/><circle cx="704.85" cy="222.55" r="0.95"/><circle cx="704.85" cy="232.70" r="0.95"/><circle cx="704.85" cy="242.85" r="0.95"/><circle cx="704.85" cy="253.00" r="0.95"/><circle cx="704.85" cy="263.15" r="0.95"/><circle cx="704.85" cy="273.30" r="0.95"/><circle cx="704.85" cy="283.45" r="0.95"/><circle cx="704.85" cy="293.60" r="0.95"/><circle cx="704.85" cy="303.75" r="0.95"/><circle cx="704.85" cy="313.90" r="0.95"/><circle cx="704.85" cy="324.05" r="0.95"/><circle cx="704.85" cy="334.20" r="0.95"/><circle cx="704.85" cy="344.35" r="0.95"/><circle cx="704.85" cy="354.50" r="0.95"/><circle cx="704.85" cy="364.65" r="0.95"/><circle cx="704.85" cy="374.80" r="0.95"/><circle cx="704.85" cy="384.95" r="0.95"/><circle cx="704.85" cy="395.10" r="0.95"/><circle cx="715.00" cy="-0.75" r="0.95"/><circle cx="715.00" cy="9.40" r="0.95"/><circle cx="715.00" cy="19.55" r="0.95"/><circle cx="715.00" cy="29.70" r="0.95"/><circle cx="715.00" cy="39.85" r="0.95"/><circle cx="715.00" cy="50.00" r="0.95"/><circle cx="715.00" cy="60.15" r="0.95"/><circle cx="715.00" cy="70.30" r="0.95"/><circle cx="715.00" cy="80.45" r="0.95"/><circle cx="715.00" cy="90.60" r="0.95"/><circle cx="715.00" cy="100.75" r="0.95"/><circle cx="715.00" cy="110.90" r="0.95"/><circle cx="715.00" cy="121.05" r="0.95"/><circle cx="715.00" cy="131.20" r="0.95"/><circle cx="715.00" cy="141.35" r="0.95"/><circle cx="715.00" cy="151.50" r="0.95"/><circle cx="715.00" cy="161.65" r="0.95"/><circle cx="715.00" cy="171.80" r="0.95"/><circle cx="715.00" cy="181.95" r="0.95"/><circle cx="715.00" cy="192.10" r="0.95"/><circle cx="715.00" cy="202.25" r="0.95"/><circle cx="715.00" cy="212.40" r="0.95"/><circle cx="715.00" cy="222.55" r="0.95"/><circle cx="715.00" cy="232.70" r="0.95"/><circle cx="715.00" cy="242.85" r="0.95"/><circle cx="715.00" cy="253.00" r="0.95"/><circle cx="715.00" cy="263.15" r="0.95"/><circle cx="715.00" cy="273.30" r="0.95"/><circle cx="715.00" cy="283.45" r="0.95"/><circle cx="715.00" cy="293.60" r="0.95"/><circle cx="715.00" cy="303.75" r="0.95"/><circle cx="715.00" cy="313.90" r="0.95"/><circle cx="715.00" cy="324.05" r="0.95"/><circle cx="715.00" cy="334.20" r="0.95"/><circle cx="715.00" cy="344.35" r="0.95"/><circle cx="715.00" cy="354.50" r="0.95"/><circle cx="715.00" cy="364.65" r="0.95"/><circle cx="715.00" cy="374.80" r="0.95"/><circle cx="715.00" cy="384.95" r="0.95"/><circle cx="715.00" cy="395.10" r="0.95"/><circle cx="725.15" cy="-0.75" r="0.95"/><circle cx="725.15" cy="9.40" r="0.95"/><circle cx="725.15" cy="19.55" r="0.95"/><circle cx="725.15" cy="29.70" r="0.95"/><circle cx="725.15" cy="39.85" r="0.95"/><circle cx="725.15" cy="50.00" r="0.95"/><circle cx="725.15" cy="60.15" r="0.95"/><circle cx="725.15" cy="70.30" r="0.95"/><circle cx="725.15" cy="80.45" r="0.95"/><circle cx="725.15" cy="90.60" r="0.95"/><circle cx="725.15" cy="100.75" r="0.95"/><circle cx="725.15" cy="110.90" r="0.95"/><circle cx="725.15" cy="121.05" r="0.95"/><circle cx="725.15" cy="131.20" r="0.95"/><circle cx="725.15" cy="141.35" r="0.95"/><circle cx="725.15" cy="151.50" r="0.95"/><circle cx="725.15" cy="161.65" r="0.95"/><circle cx="725.15" cy="171.80" r="0.95"/><circle cx="725.15" cy="181.95" r="0.95"/><circle cx="725.15" cy="192.10" r="0.95"/><circle cx="725.15" cy="202.25" r="0.95"/><circle cx="725.15" cy="212.40" r="0.95"/><circle cx="725.15" cy="222.55" r="0.95"/><circle cx="725.15" cy="232.70" r="0.95"/><circle cx="725.15" cy="242.85" r="0.95"/><circle cx="725.15" cy="253.00" r="0.95"/><circle cx="725.15" cy="263.15" r="0.95"/><circle cx="725.15" cy="273.30" r="0.95"/><circle cx="725.15" cy="283.45" r="0.95"/><circle cx="725.15" cy="293.60" r="0.95"/><circle cx="725.15" cy="303.75" r="0.95"/><circle cx="725.15" cy="313.90" r="0.95"/><circle cx="725.15" cy="324.05" r="0.95"/><circle cx="725.15" cy="334.20" r="0.95"/><circle cx="725.15" cy="344.35" r="0.95"/><circle cx="725.15" cy="354.50" r="0.95"/><circle cx="725.15" cy="364.65" r="0.95"/><circle cx="725.15" cy="374.80" r="0.95"/><circle cx="725.15" cy="384.95" r="0.95"/><circle cx="725.15" cy="395.10" r="0.95"/><circle cx="735.30" cy="-0.75" r="0.95"/><circle cx="735.30" cy="9.40" r="0.95"/><circle cx="735.30" cy="19.55" r="0.95"/><circle cx="735.30" cy="29.70" r="0.95"/><circle cx="735.30" cy="39.85" r="0.95"/><circle cx="735.30" cy="50.00" r="0.95"/><circle cx="735.30" cy="60.15" r="0.95"/><circle cx="735.30" cy="70.30" r="0.95"/><circle cx="735.30" cy="80.45" r="0.95"/><circle cx="735.30" cy="90.60" r="0.95"/><circle cx="735.30" cy="100.75" r="0.95"/><circle cx="735.30" cy="110.90" r="0.95"/><circle cx="735.30" cy="121.05" r="0.95"/><circle cx="735.30" cy="131.20" r="0.95"/><circle cx="735.30" cy="141.35" r="0.95"/><circle cx="735.30" cy="151.50" r="0.95"/><circle cx="735.30" cy="161.65" r="0.95"/><circle cx="735.30" cy="171.80" r="0.95"/><circle cx="735.30" cy="181.95" r="0.95"/><circle cx="735.30" cy="192.10" r="0.95"/><circle cx="735.30" cy="202.25" r="0.95"/><circle cx="735.30" cy="212.40" r="0.95"/><circle cx="735.30" cy="222.55" r="0.95"/><circle cx="735.30" cy="232.70" r="0.95"/><circle cx="735.30" cy="242.85" r="0.95"/><circle cx="735.30" cy="253.00" r="0.95"/><circle cx="735.30" cy="263.15" r="0.95"/><circle cx="735.30" cy="273.30" r="0.95"/><circle cx="735.30" cy="283.45" r="0.95"/><circle cx="735.30" cy="293.60" r="0.95"/><circle cx="735.30" cy="303.75" r="0.95"/><circle cx="735.30" cy="313.90" r="0.95"/><circle cx="735.30" cy="324.05" r="0.95"/><circle cx="735.30" cy="334.20" r="0.95"/><circle cx="735.30" cy="344.35" r="0.95"/><circle cx="735.30" cy="354.50" r="0.95"/><circle cx="735.30" cy="364.65" r="0.95"/><circle cx="735.30" cy="374.80" r="0.95"/><circle cx="735.30" cy="384.95" r="0.95"/><circle cx="735.30" cy="395.10" r="0.95"/><circle cx="745.45" cy="-0.75" r="0.95"/><circle cx="745.45" cy="9.40" r="0.95"/><circle cx="745.45" cy="19.55" r="0.95"/><circle cx="745.45" cy="29.70" r="0.95"/><circle cx="745.45" cy="39.85" r="0.95"/><circle cx="745.45" cy="50.00" r="0.95"/><circle cx="745.45" cy="60.15" r="0.95"/><circle cx="745.45" cy="70.30" r="0.95"/><circle cx="745.45" cy="80.45" r="0.95"/><circle cx="745.45" cy="90.60" r="0.95"/><circle cx="745.45" cy="100.75" r="0.95"/><circle cx="745.45" cy="110.90" r="0.95"/><circle cx="745.45" cy="121.05" r="0.95"/><circle cx="745.45" cy="131.20" r="0.95"/><circle cx="745.45" cy="141.35" r="0.95"/><circle cx="745.45" cy="151.50" r="0.95"/><circle cx="745.45" cy="161.65" r="0.95"/><circle cx="745.45" cy="171.80" r="0.95"/><circle cx="745.45" cy="181.95" r="0.95"/><circle cx="745.45" cy="192.10" r="0.95"/><circle cx="745.45" cy="202.25" r="0.95"/><circle cx="745.45" cy="212.40" r="0.95"/><circle cx="745.45" cy="222.55" r="0.95"/><circle cx="745.45" cy="232.70" r="0.95"/><circle cx="745.45" cy="242.85" r="0.95"/><circle cx="745.45" cy="253.00" r="0.95"/><circle cx="745.45" cy="263.15" r="0.95"/><circle cx="745.45" cy="273.30" r="0.95"/><circle cx="745.45" cy="283.45" r="0.95"/><circle cx="745.45" cy="293.60" r="0.95"/><circle cx="745.45" cy="303.75" r="0.95"/><circle cx="745.45" cy="313.90" r="0.95"/><circle cx="745.45" cy="324.05" r="0.95"/><circle cx="745.45" cy="334.20" r="0.95"/><circle cx="745.45" cy="344.35" r="0.95"/><circle cx="745.45" cy="354.50" r="0.95"/><circle cx="745.45" cy="364.65" r="0.95"/><circle cx="745.45" cy="374.80" r="0.95"/><circle cx="745.45" cy="384.95" r="0.95"/><circle cx="745.45" cy="395.10" r="0.95"/><circle cx="755.60" cy="-0.75" r="0.95"/><circle cx="755.60" cy="9.40" r="0.95"/><circle cx="755.60" cy="19.55" r="0.95"/><circle cx="755.60" cy="29.70" r="0.95"/><circle cx="755.60" cy="39.85" r="0.95"/><circle cx="755.60" cy="50.00" r="0.95"/><circle cx="755.60" cy="60.15" r="0.95"/><circle cx="755.60" cy="70.30" r="0.95"/><circle cx="755.60" cy="80.45" r="0.95"/><circle cx="755.60" cy="90.60" r="0.95"/><circle cx="755.60" cy="100.75" r="0.95"/><circle cx="755.60" cy="110.90" r="0.95"/><circle cx="755.60" cy="121.05" r="0.95"/><circle cx="755.60" cy="131.20" r="0.95"/><circle cx="755.60" cy="141.35" r="0.95"/><circle cx="755.60" cy="151.50" r="0.95"/><circle cx="755.60" cy="161.65" r="0.95"/><circle cx="755.60" cy="171.80" r="0.95"/><circle cx="755.60" cy="181.95" r="0.95"/><circle cx="755.60" cy="192.10" r="0.95"/><circle cx="755.60" cy="202.25" r="0.95"/><circle cx="755.60" cy="212.40" r="0.95"/><circle cx="755.60" cy="222.55" r="0.95"/><circle cx="755.60" cy="232.70" r="0.95"/><circle cx="755.60" cy="242.85" r="0.95"/><circle cx="755.60" cy="253.00" r="0.95"/><circle cx="755.60" cy="263.15" r="0.95"/><circle cx="755.60" cy="273.30" r="0.95"/><circle cx="755.60" cy="283.45" r="0.95"/><circle cx="755.60" cy="293.60" r="0.95"/><circle cx="755.60" cy="303.75" r="0.95"/><circle cx="755.60" cy="313.90" r="0.95"/><circle cx="755.60" cy="324.05" r="0.95"/><circle cx="755.60" cy="334.20" r="0.95"/><circle cx="755.60" cy="344.35" r="0.95"/><circle cx="755.60" cy="354.50" r="0.95"/><circle cx="755.60" cy="364.65" r="0.95"/><circle cx="755.60" cy="374.80" r="0.95"/><circle cx="755.60" cy="384.95" r="0.95"/><circle cx="755.60" cy="395.10" r="0.95"/></g>
<path d="M116.3,-2 V185 Q116.3,192.5 124,192.5 H127" fill="none" stroke="#bdb997" stroke-width="2.6"/>
<path d="M664,334 H708 Q715.5,334 715.5,326.5 V-2" fill="none" stroke="#bdb997" stroke-width="2.6"/>
<path d="M309.5,182.6 H350" fill="none" stroke="#b01820" stroke-width="2.2"/>
<path d="M208,222.6 H209.5 Q217.8,222.6 217.8,214 V190.5 Q217.8,182.6 225.5,182.6 H228" fill="none" stroke="#9c14a4" stroke-width="2.5"/>
<path d="M400.5,182.5 H434 Q441.1,182.5 441.1,189.5 V403" fill="none" stroke="#88aeae" stroke-width="2.6"/>
<defs>
<linearGradient id="anl" x1="0" y1="0" x2="0" y2="1"><stop offset="0" stop-color="#e01c18"/><stop offset="0.5" stop-color="#f03c1c"/><stop offset="0.75" stop-color="#f8a018"/><stop offset="1" stop-color="#f8d038"/></linearGradient>
<linearGradient id="hdrS" x1="0" y1="0" x2="0" y2="1"><stop offset="0" stop-color="#f8ccb4"/><stop offset="0.55" stop-color="#f8ac84"/><stop offset="1" stop-color="#f49c70"/></linearGradient>
<linearGradient id="hdrB" x1="0" y1="0" x2="0" y2="1"><stop offset="0" stop-color="#e4f2fa"/><stop offset="1" stop-color="#a9d3ec"/></linearGradient>
</defs>
<rect x="126.5" y="162.5" width="81" height="71" rx="3" fill="#b0c4de" stroke="#4a5566" stroke-width="1"/>
<path d="M127,176 V165.5 Q127,163 129.5,163 H204.5 Q207,163 207,165.5 V176z" fill="url(#hdrS)"/>
<rect x="127" y="175.80" width="80" height="1.6" fill="#71839a"/>
<rect x="128.3" y="166.3" width="9.7" height="4.8" rx="1.2" fill="#1a2050"/><rect x="130" y="168" width="1.6" height="1.5" fill="#c0d0ff"/><rect x="132.4" y="168" width="1.6" height="1.5" fill="#c0d0ff"/><rect x="134.8" y="168" width="1.6" height="1.5" fill="#c0d0ff"/>
<text x="141.8" y="171.8" font-size="7" font-weight="bold" fill="#2a1a10" stroke="#2a1a10" stroke-width="0.22" text-anchor="start" >Counter1</text>
<path d="M197.5,166.5 L202,172" stroke="#a8b0b8" stroke-width="1.6"/><circle cx="197.3" cy="166.3" r="1.6" fill="#b8bcc4"/><circle cx="202" cy="172" r="1.6" fill="#98a8b0"/><path d="M195.5,173.5 L201.5,167.5" stroke="#9a4a10" stroke-width="2.2"/><path d="M201.5,167.5 L204,165" stroke="#c0c0c8" stroke-width="1.2"/><circle cx="203.8" cy="165" r="1.1" fill="#f0f0f0"/>
<path d="M131,184.3 h2.3 v-5.6 h3.4 v5.6 h2" fill="none" stroke="#102040" stroke-width="1.15" stroke-linejoin="miter"/>
<text x="141" y="184.8" font-size="7" font-weight="normal" fill="#131b30" stroke="#131b30" stroke-width="0.22" text-anchor="start" >Reset</text>
<rect x="131" y="189.3" width="7.6" height="7.8" rx="1.2" fill="#e84a2c"/><rect x="132.2" y="190.3" width="3" height="5.5" rx="1" fill="#f6a890"/><path d="M134.5,192.3 L137.5,189.7 L136.3,188.5 L140.6,187.7 L139.8,191.9 L138.6,190.7 L135.6,193.5z" fill="#2266d8"/>
<text x="141" y="195" font-size="7" font-weight="normal" fill="#131b30" stroke="#131b30" stroke-width="0.22" text-anchor="start" >In</text>
<path d="M207.5,178.2 H166.8 Q163.8,178.2 163.8,181.2 V193.8 Q163.8,196.8 166.8,196.8 H207.5" fill="#87cefa" stroke="#3a4a60" stroke-width="1"/>
<rect x="164.5" y="196.80" width="43.0" height="1.2" fill="#6a7a90"/>
<path d="M165.5,179 h6" stroke="#e03030" stroke-width="0.8"/><path d="M168.5,179.5 l3.2,3.5 h-2 v5 h-2.4 v-5 h-2z" fill="#28c828"/>
<text x="175.5" y="185" font-size="7" font-weight="normal" fill="#1e3264" stroke="#1e3264" stroke-width="0.2" text-anchor="start" >Max</text>
<text x="166" y="194.5" font-size="7" font-weight="normal" fill="#131b30" stroke="#131b30" stroke-width="0.22" text-anchor="start" >Reached</text>
<rect x="195.2" y="187.8" width="8" height="8.3" rx="1.2" fill="#e85a3c"/><rect x="195.2" y="187.8" width="8" height="3" rx="1.2" fill="#f07a5a"/><rect x="197.5" y="189.8" width="3.4" height="4.4" rx="1.5" fill="none" stroke="#fbd0b8" stroke-width="0.8"/>
<path d="M207.5,198.5 H166.8 Q163.8,198.5 163.8,201.5 V214.2 Q163.8,217.2 166.8,217.2 H207.5" fill="#87cefa" stroke="#3a4a60" stroke-width="1"/>
<path d="M165.5,207.5 h6" stroke="#e03030" stroke-width="0.8"/><path d="M168.5,207 l3.2,-3.5 h-2 v-5 h-2.4 v5 h-2z" fill="#28c828"/>
<text x="175.5" y="205" font-size="7" font-weight="normal" fill="#1e3264" stroke="#1e3264" stroke-width="0.2" text-anchor="start" >Min</text>
<text x="166" y="214.5" font-size="7" font-weight="normal" fill="#131b30" stroke="#131b30" stroke-width="0.22" text-anchor="start" >Reached</text>
<rect x="195.2" y="207.8" width="8" height="8.3" rx="1.2" fill="#e85a3c"/><rect x="195.2" y="207.8" width="8" height="3" rx="1.2" fill="#f07a5a"/><rect x="197.5" y="209.8" width="3.4" height="4.4" rx="1.5" fill="none" stroke="#fbd0b8" stroke-width="0.8"/>
<text x="194.5" y="225" font-size="7" font-weight="normal" fill="#131b30" stroke="#131b30" stroke-width="0.22" text-anchor="end" >Out</text>
<text x="195.3" y="225.3" font-size="9" font-weight="bold" fill="#f014f0" stroke="#f014f0" stroke-width="0.5" text-anchor="start" textLength="9.8" lengthAdjust="spacingAndGlyphs">I32</text>
<rect x="228.3" y="162.3" width="81.2" height="29.8" rx="3" fill="#fdf6e2" stroke="#d98a8a" stroke-width="1.3"/>
<path d="M229,175.7 V165.5 Q229,163 231.5,163 H306.3 Q308.8,163 308.8,165.5 V175.7z" fill="url(#hdrB)"/>
<rect x="229" y="175.35" width="80" height="1.3" fill="#d98a8a"/>
<rect x="231.5" y="164" width="4.5" height="5" fill="#d8e0e8" opacity="0.8"/><path d="M236.5,164.5 l2,-0.5 l0.5,6 l-2,0.5z" fill="#88d040"/><path d="M234,170 q3,-2.5 6,0 q0,3 -3,4.5 q-3,-1.5 -3,-4.5z" fill="#e03810"/><path d="M235.5,171.5 q1.5,-1 3,0 q0,1.5 -1.5,2.3 q-1.5,-0.8 -1.5,-2.3z" fill="#f8c020"/>
<text x="243" y="172.1" font-size="7" font-weight="bold" fill="#202020" stroke="#202020" stroke-width="0.22" text-anchor="start" >IntegerToAnalog1</text>
<text x="230.8" y="184.6" font-size="9" font-weight="bold" fill="#f014f0" stroke="#f014f0" stroke-width="0.5" text-anchor="start" textLength="9.8" lengthAdjust="spacingAndGlyphs">I32</text>
<text x="241.8" y="184.6" font-size="7" font-weight="normal" fill="#1a1a1a" stroke="#1a1a1a" stroke-width="0.22" text-anchor="start" >In</text>
<text x="296.5" y="184.6" font-size="7" font-weight="normal" fill="#1a1a1a" stroke="#1a1a1a" stroke-width="0.22" text-anchor="end" >Out</text>
<path d="M297.3,186.3 V180.2 Q298.1,178 299.7,179.2 L301.3,181.8 Q302.90000000000003,180.6 304.5,182 L304.90000000000003,186.3 Z" fill="url(#anl)"/>
<rect x="350.3" y="162.5" width="50" height="29.7" rx="3" fill="#b0c4de" stroke="#3e4652" stroke-width="1"/>
<path d="M350.8,176 V165.5 Q350.8,163 353.5,163 H397.3 Q399.8,163 399.8,165.5 V176z" fill="url(#hdrS)"/>
<rect x="351" y="175.90" width="48.80000000000001" height="1.4" fill="#71839a"/>
<path d="M353,171.3 L357.8,165.3 L360.6,167.6 L355.8,173.4z" fill="#1e2a78"/><path d="M355.5,169.5 L358.3,166.2" stroke="#8a9ae0" stroke-width="1.1"/><path d="M357.8,165.3 L359.5,164 L361.5,165.8 L360.6,167.6z" fill="#c8a8e0"/>
<text x="365.5" y="171.9" font-size="7" font-weight="bold" fill="#2a1a10" stroke="#2a1a10" stroke-width="0.22" text-anchor="start" >Servo1</text>
<path d="M353.7,186.5 V180.39999999999998 Q354.5,178.2 356.09999999999997,179.39999999999998 L357.7,182.0 Q359.3,180.79999999999998 360.9,182.2 L361.3,186.5 Z" fill="url(#anl)"/>
<text x="364" y="184.7" font-size="7" font-weight="normal" fill="#131b30" stroke="#131b30" stroke-width="0.22" text-anchor="start" >In</text>
<text x="387.5" y="184.7" font-size="7" font-weight="normal" fill="#131b30" stroke="#131b30" stroke-width="0.22" text-anchor="end" >Out</text>
<rect x="387.8" y="178.8" width="7.6" height="7.8" rx="1.2" fill="#e84a2c"/><rect x="389.0" y="179.8" width="3" height="5.5" rx="1" fill="#f6a890"/><path d="M391.3,181.8 L394.3,179.2 L393.1,178 L397.40000000000003,177.2 L396.6,181.4 L395.40000000000003,180.2 L392.40000000000003,183z" fill="#2266d8"/>
<rect x="492.2" y="-2" width="172.3" height="405" fill="#87cefa"/>
<rect x="491.7" y="-2" width="1" height="405" fill="#222c38"/><rect x="664.0" y="-2" width="1" height="405" fill="#222c38"/>
<text x="506" y="1.2" font-size="7" font-weight="normal" fill="#131b30" stroke="#131b30" stroke-width="0.22" text-anchor="start" >Clock</text>
<path d="M497,0.7 h2.3 v-5.6 h3.4 v5.6 h2" fill="none" stroke="#102040" stroke-width="1.15" stroke-linejoin="miter"/>
<rect x="492.2" y="3.90" width="172.3" height="2.0" fill="#2f3b4d"/>
<path d="M556,13 v-4 a3.3,3.3 0 0 1 6.6,0 v4" fill="none" stroke="#d83030" stroke-width="2"/><rect x="555" y="12" width="2" height="2" fill="#ccc"/><rect x="561.6" y="12" width="2" height="2" fill="#ccc"/><path d="M560.5,6.5 l2,1" stroke="#3080d0" stroke-width="1.5"/>
<text x="565.7" y="12.6" font-size="7" font-weight="normal" fill="#1e3264" stroke="#1e3264" stroke-width="0.2" text-anchor="start" >Hall Sensor</text>
<path d="M497,21.3 h2.3 v-5.6 h3.4 v5.6 h2" fill="none" stroke="#102040" stroke-width="1.15" stroke-linejoin="miter"/>
<text x="506" y="21.8" font-size="7" font-weight="normal" fill="#131b30" stroke="#131b30" stroke-width="0.22" text-anchor="start" >Clock</text>
<text x="651" y="21.8" font-size="7" font-weight="normal" fill="#131b30" stroke="#131b30" stroke-width="0.22" text-anchor="end" >Out</text>
<path d="M652.6,23.3 V17.2 Q653.4,15 655.0,16.2 L656.6,18.8 Q658.2,17.6 659.8000000000001,19 L660.2,23.3 Z" fill="url(#anl)"/>
<rect x="492.2" y="24.00" width="172.3" height="2.0" fill="#2f3b4d"/>
<rect x="554" y="26.5" width="6" height="9" rx="2.5" fill="#dceaf8" stroke="#5a88c0" stroke-width="0.7"/><path d="M555.5,29.5 l3,3 l-1.5,1.5 v-6 l1.5,1.5 l-3,3" fill="none" stroke="#5a88c0" stroke-width="0.6"/>
<text x="563.7" y="32.6" font-size="7" font-weight="normal" fill="#1e3264" stroke="#1e3264" stroke-width="0.2" text-anchor="start" >Bluetooth LE</text>
<rect x="492.2" y="34.95" width="172.3" height="1.3" fill="#46607e"/>
<rect x="566.5" y="36.5" width="6" height="9" rx="2.5" fill="#dceaf8" stroke="#5a88c0" stroke-width="0.7"/><path d="M568.0,39.5 l3,3 l-1.5,1.5 v-6 l1.5,1.5 l-3,3" fill="none" stroke="#5a88c0" stroke-width="0.6"/>
<text x="573.5" y="43" font-size="7" font-weight="normal" fill="#1e3264" stroke="#1e3264" stroke-width="0.2" text-anchor="start" >Server</text>
<rect x="492.2" y="45.15" width="172.3" height="1.5" fill="#46607e"/>
<path d="M545,56 l4,-8 l4,2 l-1,6z" fill="#20242c"/><rect x="549" y="47" width="5" height="8" rx="2" fill="#dceaf8" stroke="#5a88c0" stroke-width="0.6"/><rect x="545" y="55" width="8" height="2" fill="#e0c8a0"/>
<text x="555.6" y="53" font-size="7" font-weight="normal" fill="#1e3264" stroke="#1e3264" stroke-width="0.2" text-anchor="start" >BLE Server Serial</text>
<path d="M497.5,58.0 Q501.0,56.0 504.5,58.0 L502.1,62.5 H499.9z" fill="#d4d0c4" stroke="#9c9480" stroke-width="0.5"/><ellipse cx="501.0" cy="57.1" rx="2.8" ry="1.5" fill="#f0c038"/><rect x="500.5" y="62.5" width="1" height="2" fill="#585040"/>
<text x="505.6" y="62.5" font-size="7" font-weight="normal" fill="#131b30" stroke="#131b30" stroke-width="0.22" text-anchor="start" >In</text>
<text x="651" y="62.5" font-size="7" font-weight="normal" fill="#131b30" stroke="#131b30" stroke-width="0.22" text-anchor="end" >Out</text>
<rect x="652.7" y="56.0" width="7.6" height="9" fill="#eef2f6" stroke="#b0bccc" stroke-width="0.5"/><rect x="654.5" y="58.0" width="2" height="3" fill="#98a4b4"/><rect x="656.8" y="59.5" width="2.4" height="4.5" fill="#a8b8d8"/>
<rect x="492.2" y="64.30" width="172.3" height="1.2" fill="#46607e"/>
<rect x="498.5" y="66" width="6" height="9" rx="2.5" fill="#dceaf8" stroke="#5a88c0" stroke-width="0.7"/><path d="M500.0,69 l3,3 l-1.5,1.5 v-6 l1.5,1.5 l-3,3" fill="none" stroke="#5a88c0" stroke-width="0.6"/>
<text x="505.6" y="72.7" font-size="7" font-weight="normal" fill="#131b30" stroke="#131b30" stroke-width="0.22" text-anchor="start" >In</text>
<rect x="492.2" y="74.65" width="172.3" height="1.5" fill="#46607e"/>
<text x="650.5" y="82.8" font-size="7" font-weight="normal" fill="#131b30" stroke="#131b30" stroke-width="0.22" text-anchor="end" >Connected Count</text>
<text x="651.8" y="83.8" font-size="9" font-weight="bold" fill="#f014f0" stroke="#f014f0" stroke-width="0.5" text-anchor="start" textLength="9.8" lengthAdjust="spacingAndGlyphs">I32</text>
<text x="650.5" y="92.8" font-size="7" font-weight="normal" fill="#131b30" stroke="#131b30" stroke-width="0.22" text-anchor="end" >MAC Address</text>
<rect x="651.5" y="86.2" width="10" height="8" rx="3" fill="#2b86b8"/><rect x="652.5" y="87.0" width="8" height="3.5" rx="1.5" fill="#9ad4ee"/><rect x="654" y="88.0" width="5" height="1.2" fill="#e8f6fc"/><path d="M654.5,94.0 l1.5,1.5 l1.5,-1.5z" fill="#2070a0"/>
<rect x="492.2" y="94.70" width="172.3" height="2.0" fill="#2f3b4d"/>
<path d="M492.2,97.2 H566.2 Q569.2,97.2 569.2,100.2 V112.8 Q569.2,115.8 566.2,115.8 H492.2" fill="none" stroke="#2f3b4d" stroke-width="1"/>
<rect x="492.2" y="115.90" width="75.80000000000001" height="1.4" fill="#3a4a5e"/>
<path d="M497,101 l3,-3 l4,2 l-3,3z" fill="#d02828"/><path d="M498,104 l5,2 l-2,7 l-4,-2z" fill="#30a040"/><path d="M500,109 l4,-4" stroke="#2050a0" stroke-width="1.5"/>
<text x="506" y="104" font-size="7" font-weight="normal" fill="#1e3264" stroke="#1e3264" stroke-width="0.2" text-anchor="start" >Infrared Transmitter</text>
<text x="506" y="113.7" font-size="7" font-weight="normal" fill="#131b30" stroke="#131b30" stroke-width="0.22" text-anchor="start" >In</text>
<path d="M492.2,117.6 H566.2 Q569.2,117.6 569.2,120.6 V133.3 Q569.2,136.3 566.2,136.3 H492.2" fill="none" stroke="#2f3b4d" stroke-width="1"/>
<rect x="492.2" y="136.30" width="75.80000000000001" height="1.4" fill="#3a4a5e"/>
<path d="M501,118 v18 M497,121 l4,3 l4,-3 M497,128 l4,3 l4,-3 M497,133 l4,-2 l4,2" fill="none" stroke="#30b050" stroke-width="1.2"/>
<text x="506" y="124.5" font-size="7" font-weight="normal" fill="#1e3264" stroke="#1e3264" stroke-width="0.2" text-anchor="start" >Grove</text>
<text x="506" y="133.7" font-size="7" font-weight="normal" fill="#131b30" stroke="#131b30" stroke-width="0.22" text-anchor="start" >In</text>
<path d="M492.2,137.8 H566.2 Q569.2,137.8 569.2,140.8 V163.2 Q569.2,166.2 566.2,166.2 H492.2" fill="none" stroke="#2f3b4d" stroke-width="1"/>
<rect x="496" y="138.0" width="2" height="2.3" fill="#e02020"/><rect x="498" y="138.0" width="2" height="2.3" fill="#30c030"/><rect x="500" y="138.0" width="2" height="2.3" fill="#f0e020"/><rect x="502" y="138.0" width="2" height="2.3" fill="#6030c0"/><rect x="496" y="140.3" width="2" height="2.3" fill="#3030c0"/><rect x="498" y="140.3" width="2" height="2.3" fill="#e0e020"/><rect x="500" y="140.3" width="2" height="2.3" fill="#c02080"/><rect x="502" y="140.3" width="2" height="2.3" fill="#20a040"/><rect x="496" y="142.6" width="2" height="2.3" fill="#f0e020"/><rect x="498" y="142.6" width="2" height="2.3" fill="#c02020"/><rect x="500" y="142.6" width="2" height="2.3" fill="#4040d0"/><rect x="502" y="142.6" width="2" height="2.3" fill="#e03030"/><rect x="496" y="144.9" width="2" height="2.3" fill="#6020a0"/><rect x="498" y="144.9" width="2" height="2.3" fill="#e02040"/><rect x="500" y="144.9" width="2" height="2.3" fill="#2040c0"/><rect x="502" y="144.9" width="2" height="2.3" fill="#30a0e0"/>
<text x="506" y="144.8" font-size="7" font-weight="normal" fill="#1e3264" stroke="#1e3264" stroke-width="0.2" text-anchor="start" >RGB Matrix</text>
<rect x="495.0" y="147.7" width="10" height="8" rx="3" fill="#2b86b8"/><rect x="496.0" y="148.5" width="8" height="3.5" rx="1.5" fill="#9ad4ee"/><rect x="497.5" y="149.5" width="5" height="1.2" fill="#e8f6fc"/><path d="M498.0,155.5 l1.5,1.5 l1.5,-1.5z" fill="#2070a0"/>
<text x="506" y="154.2" font-size="7" font-weight="normal" fill="#131b30" stroke="#131b30" stroke-width="0.22" text-anchor="start" >In</text>
<path d="M497,163.7 h2.3 v-5.6 h3.4 v5.6 h2" fill="none" stroke="#102040" stroke-width="1.15" stroke-linejoin="miter"/>
<text x="506" y="164.2" font-size="7" font-weight="normal" fill="#131b30" stroke="#131b30" stroke-width="0.22" text-anchor="start" >Refresh</text>
<path d="M664.5,97.2 H581.7 Q578.7,97.2 578.7,100.2 V314.8 Q578.7,317.8 581.7,317.8 H664.5" fill="none" stroke="#2f3b4d" stroke-width="1.2"/>
<path d="M580,99.5 a6,6 0 0 1 9,0" fill="none" stroke="#40c040" stroke-width="1.5"/><path d="M581.5,102 a4,4 0 0 1 6,0" fill="none" stroke="#40c040" stroke-width="1.5"/><circle cx="584.5" cy="104.5" r="1.2" fill="#40c040"/>
<text x="590" y="104.2" font-size="7" font-weight="normal" fill="#1e3264" stroke="#1e3264" stroke-width="0.2" text-anchor="start" >WiFi</text>
<rect x="578.7" y="106.30" width="85.79999999999995" height="1.2" fill="#46607e"/>
<circle cx="585.5" cy="110" r="3" fill="#d83040"/><path d="M580,115 l2,-4 l2,4" fill="none" stroke="#111" stroke-width="0.8"/>
<text x="590" y="114" font-size="7" font-weight="normal" fill="#1e3264" stroke="#1e3264" stroke-width="0.2" text-anchor="start" >ESP-Now</text>
<rect x="578.7" y="116.70" width="85.79999999999995" height="1.2" fill="#2f3b4d"/>
<rect x="579.5" y="119.5" width="8.5" height="6.5" fill="#f0f0e8" stroke="#a0a090" stroke-width="0.6"/><path d="M583,117 v3" stroke="#30a030" stroke-width="1.2"/>
<text x="590" y="124.2" font-size="7" font-weight="normal" fill="#1e3264" stroke="#1e3264" stroke-width="0.2" text-anchor="start" >Received</text>
<text x="649.8" y="134" font-size="7" font-weight="normal" fill="#131b30" stroke="#131b30" stroke-width="0.22" text-anchor="end" >Completed</text>
<path d="M652,133.7 h2.3 v-5.6 h3.4 v5.6 h2" fill="none" stroke="#102040" stroke-width="1.15" stroke-linejoin="miter"/>
<text x="649.8" y="143.6" font-size="7" font-weight="normal" fill="#131b30" stroke="#131b30" stroke-width="0.22" text-anchor="end" >Out</text>
<rect x="652.2" y="137.0" width="7.6" height="9" fill="#eef2f6" stroke="#b0bccc" stroke-width="0.5"/><rect x="654.0" y="139.0" width="2" height="3" fill="#98a4b4"/><rect x="656.3" y="140.5" width="2.4" height="4.5" fill="#a8b8d8"/>
<text x="649.8" y="153.6" font-size="7" font-weight="normal" fill="#131b30" stroke="#131b30" stroke-width="0.22" text-anchor="end" >MACAddress</text>
<rect x="651.5" y="146.2" width="10" height="8" rx="3" fill="#2b86b8"/><rect x="652.5" y="147.0" width="8" height="3.5" rx="1.5" fill="#9ad4ee"/><rect x="654" y="148.0" width="5" height="1.2" fill="#e8f6fc"/><path d="M654.5,154.0 l1.5,1.5 l1.5,-1.5z" fill="#2070a0"/>
<rect x="578.7" y="155.55" width="85.79999999999995" height="1.5" fill="#2f3b4d"/>
<text x="651" y="164.2" font-size="7" font-weight="normal" fill="#131b30" stroke="#131b30" stroke-width="0.22" text-anchor="end" >Version</text>
<text x="651.7" y="164.7" font-size="9" font-weight="bold" fill="#f014f0" stroke="#f014f0" stroke-width="0.5" text-anchor="start" textLength="9.8" lengthAdjust="spacingAndGlyphs">U32</text>
<rect x="578.7" y="165.80" width="85.79999999999995" height="2.0" fill="#2f3b4d"/>
<rect x="579.5" y="168.5" width="8" height="6.5" fill="#f0f0f0" stroke="#909090" stroke-width="0.5"/><rect x="581" y="169.8" width="5" height="4" fill="#806040"/><path d="M583.5,175 v2.5 M580,177.5 h7" stroke="#30a030" stroke-width="0.9"/>
<text x="590" y="174.9" font-size="7" font-weight="normal" fill="#1e3264" stroke="#1e3264" stroke-width="0.2" text-anchor="start" >Ethernet</text>
<text x="650.4" y="184.7" font-size="7" font-weight="normal" fill="#131b30" stroke="#131b30" stroke-width="0.22" text-anchor="end" >Subnet Mask IP</text>
<rect x="651.5" y="177.89999999999998" width="10" height="8" rx="3" fill="#2b86b8"/><rect x="652.5" y="178.7" width="8" height="3.5" rx="1.5" fill="#9ad4ee"/><rect x="654" y="179.7" width="5" height="1.2" fill="#e8f6fc"/><path d="M654.5,185.7 l1.5,1.5 l1.5,-1.5z" fill="#2070a0"/>
<text x="650.4" y="194.9" font-size="7" font-weight="normal" fill="#131b30" stroke="#131b30" stroke-width="0.22" text-anchor="end" >Gateway IP</text>
<rect x="651.5" y="188.1" width="10" height="8" rx="3" fill="#2b86b8"/><rect x="652.5" y="188.9" width="8" height="3.5" rx="1.5" fill="#9ad4ee"/><rect x="654" y="189.9" width="5" height="1.2" fill="#e8f6fc"/><path d="M654.5,195.9 l1.5,1.5 l1.5,-1.5z" fill="#2070a0"/>
<text x="650.4" y="204.8" font-size="7" font-weight="normal" fill="#131b30" stroke="#131b30" stroke-width="0.22" text-anchor="end" >Address</text>
<rect x="651.5" y="198.0" width="10" height="8" rx="3" fill="#2b86b8"/><rect x="652.5" y="198.8" width="8" height="3.5" rx="1.5" fill="#9ad4ee"/><rect x="654" y="199.8" width="5" height="1.2" fill="#e8f6fc"/><path d="M654.5,205.8 l1.5,1.5 l1.5,-1.5z" fill="#2070a0"/>
<text x="650.4" y="214.9" font-size="7" font-weight="normal" fill="#131b30" stroke="#131b30" stroke-width="0.22" text-anchor="end" >MAC Address</text>
<rect x="651.5" y="208.1" width="10" height="8" rx="3" fill="#2b86b8"/><rect x="652.5" y="208.9" width="8" height="3.5" rx="1.5" fill="#9ad4ee"/><rect x="654" y="209.9" width="5" height="1.2" fill="#e8f6fc"/><path d="M654.5,215.9 l1.5,1.5 l1.5,-1.5z" fill="#2070a0"/>
<text x="650.4" y="224.9" font-size="7" font-weight="normal" fill="#131b30" stroke="#131b30" stroke-width="0.22" text-anchor="end" >Speed (Mbps)</text>
<text x="651.7" y="225.3" font-size="9" font-weight="bold" fill="#f014f0" stroke="#f014f0" stroke-width="0.5" text-anchor="start" textLength="9.8" lengthAdjust="spacingAndGlyphs">U32</text>
<text x="650.4" y="235" font-size="7" font-weight="normal" fill="#131b30" stroke="#131b30" stroke-width="0.22" text-anchor="end" >Link Up</text>
<rect x="652.2" y="228.5" width="8" height="8.3" rx="1.2" fill="#e85a3c"/><rect x="652.2" y="228.5" width="8" height="3" rx="1.2" fill="#f07a5a"/><rect x="654.5" y="230.5" width="3.4" height="4.4" rx="1.5" fill="none" stroke="#fbd0b8" stroke-width="0.8"/>
<text x="650.4" y="245.1" font-size="7" font-weight="normal" fill="#131b30" stroke="#131b30" stroke-width="0.22" text-anchor="end" >Full Duplex</text>
<rect x="652.2" y="238.6" width="8" height="8.3" rx="1.2" fill="#e85a3c"/><rect x="652.2" y="238.6" width="8" height="3" rx="1.2" fill="#f07a5a"/><rect x="654.5" y="240.6" width="3.4" height="4.4" rx="1.5" fill="none" stroke="#fbd0b8" stroke-width="0.8"/>
<text x="650.4" y="255.4" font-size="7" font-weight="normal" fill="#131b30" stroke="#131b30" stroke-width="0.22" text-anchor="end" >Connected</text>
<rect x="652.2" y="248.9" width="8" height="8.3" rx="1.2" fill="#e85a3c"/><rect x="652.2" y="248.9" width="8" height="3" rx="1.2" fill="#f07a5a"/><rect x="654.5" y="250.9" width="3.4" height="4.4" rx="1.5" fill="none" stroke="#fbd0b8" stroke-width="0.8"/>
<rect x="578.7" y="256.60" width="85.79999999999995" height="1.2" fill="#2f3b4d"/>
<text x="650.4" y="265.5" font-size="7" font-weight="normal" fill="#131b30" stroke="#131b30" stroke-width="0.22" text-anchor="end" >Remote Connected</text>
<rect x="652.2" y="259.0" width="8" height="8.3" rx="1.2" fill="#e85a3c"/><rect x="652.2" y="259.0" width="8" height="3" rx="1.2" fill="#f07a5a"/><rect x="654.5" y="261.0" width="3.4" height="4.4" rx="1.5" fill="none" stroke="#fbd0b8" stroke-width="0.8"/>
<text x="650.4" y="275.6" font-size="7" font-weight="normal" fill="#131b30" stroke="#131b30" stroke-width="0.22" text-anchor="end" >Subnet Mask IP</text>
<rect x="651.5" y="268.8" width="10" height="8" rx="3" fill="#2b86b8"/><rect x="652.5" y="269.6" width="8" height="3.5" rx="1.5" fill="#9ad4ee"/><rect x="654" y="270.6" width="5" height="1.2" fill="#e8f6fc"/><path d="M654.5,276.6 l1.5,1.5 l1.5,-1.5z" fill="#2070a0"/>
<text x="650.4" y="285.8" font-size="7" font-weight="normal" fill="#131b30" stroke="#131b30" stroke-width="0.22" text-anchor="end" >Gateway IP</text>
<rect x="651.5" y="279.0" width="10" height="8" rx="3" fill="#2b86b8"/><rect x="652.5" y="279.8" width="8" height="3.5" rx="1.5" fill="#9ad4ee"/><rect x="654" y="280.8" width="5" height="1.2" fill="#e8f6fc"/><path d="M654.5,286.8 l1.5,1.5 l1.5,-1.5z" fill="#2070a0"/>
<text x="650.4" y="296" font-size="7" font-weight="normal" fill="#131b30" stroke="#131b30" stroke-width="0.22" text-anchor="end" >BSSID</text>
<rect x="651.5" y="289.2" width="10" height="8" rx="3" fill="#2b86b8"/><rect x="652.5" y="290.0" width="8" height="3.5" rx="1.5" fill="#9ad4ee"/><rect x="654" y="291.0" width="5" height="1.2" fill="#e8f6fc"/><path d="M654.5,297.0 l1.5,1.5 l1.5,-1.5z" fill="#2070a0"/>
<text x="650.4" y="306.1" font-size="7" font-weight="normal" fill="#131b30" stroke="#131b30" stroke-width="0.22" text-anchor="end" >MAC Address</text>
<rect x="651.5" y="299.3" width="10" height="8" rx="3" fill="#2b86b8"/><rect x="652.5" y="300.1" width="8" height="3.5" rx="1.5" fill="#9ad4ee"/><rect x="654" y="301.1" width="5" height="1.2" fill="#e8f6fc"/><path d="M654.5,307.1 l1.5,1.5 l1.5,-1.5z" fill="#2070a0"/>
<text x="650.4" y="316.2" font-size="7" font-weight="normal" fill="#131b30" stroke="#131b30" stroke-width="0.22" text-anchor="end" >Address</text>
<rect x="651.5" y="309.4" width="10" height="8" rx="3" fill="#2b86b8"/><rect x="652.5" y="310.2" width="8" height="3.5" rx="1.5" fill="#9ad4ee"/><rect x="654" y="311.2" width="5" height="1.2" fill="#e8f6fc"/><path d="M654.5,317.2 l1.5,1.5 l1.5,-1.5z" fill="#2070a0"/>
<rect x="579.7" y="318.60" width="84.79999999999995" height="2.0" fill="#3a4658"/>
<path d="M664.5,320.6 H581.7 Q578.7,320.6 578.7,323.6 V335.8 Q578.7,338.8 581.7,338.8 H664.5" fill="none" stroke="#2f3b4d" stroke-width="1.2"/>
<ellipse cx="584" cy="328.3" rx="3.6" ry="1.3" fill="#d8c8c0"/><circle cx="584" cy="324.3" r="3.6" fill="#e80c0c"/><circle cx="583" cy="323.2" r="1.4" fill="#ff5050"/>
<text x="590" y="327.2" font-size="7" font-weight="normal" fill="#1e3264" stroke="#1e3264" stroke-width="0.2" text-anchor="start" >Button</text>
<text x="651" y="337" font-size="7" font-weight="normal" fill="#131b30" stroke="#131b30" stroke-width="0.22" text-anchor="end" >Out</text>
<rect x="652.2" y="330.8" width="7.6" height="7.8" rx="1.2" fill="#e84a2c"/><rect x="653.4000000000001" y="331.8" width="3" height="5.5" rx="1" fill="#f6a890"/><path d="M655.7,333.8 L658.7,331.2 L657.5,330 L661.8000000000001,329.2 L661.0,333.4 L659.8000000000001,332.2 L656.8000000000001,335z" fill="#2266d8"/>
<rect x="492.2" y="342.90" width="172.3" height="2.0" fill="#2f3b4d"/>
<path d="M565,347.5 Q568.5,345.5 572,347.5 L569.6,352 H567.4z" fill="#d4d0c4" stroke="#9c9480" stroke-width="0.5"/><ellipse cx="568.5" cy="346.6" rx="2.8" ry="1.5" fill="#f0c038"/><rect x="568" y="352" width="1" height="2" fill="#585040"/>
<text x="574" y="352" font-size="7" font-weight="normal" fill="#1e3264" stroke="#1e3264" stroke-width="0.2" text-anchor="start" >Serial</text>
<rect x="492.2" y="354.30" width="172.3" height="1.6" fill="#46607e"/>
<path d="M547.5,358.0 Q551.0,356.0 554.5,358.0 L552.1,362.5 H549.9z" fill="#d4d0c4" stroke="#9c9480" stroke-width="0.5"/><ellipse cx="551.0" cy="357.1" rx="2.8" ry="1.5" fill="#f0c038"/><rect x="550.5" y="362.5" width="1" height="2" fill="#585040"/>
<text x="557.8" y="362.2" font-size="7" font-weight="normal" fill="#1e3264" stroke="#1e3264" stroke-width="0.2" text-anchor="start" >Serial[ 0 ] (9600)</text>
<path d="M496,372.5 Q499.5,370.5 503,372.5 L500.6,377 H498.4z" fill="#d4d0c4" stroke="#9c9480" stroke-width="0.5"/><ellipse cx="499.5" cy="371.6" rx="2.8" ry="1.5" fill="#f0c038"/><rect x="499" y="377" width="1" height="2" fill="#585040"/>
<text x="505.5" y="377.5" font-size="7" font-weight="normal" fill="#131b30" stroke="#131b30" stroke-width="0.22" text-anchor="start" >In</text>
<text x="650.5" y="377.5" font-size="7" font-weight="normal" fill="#131b30" stroke="#131b30" stroke-width="0.22" text-anchor="end" >Sending</text>
<rect x="652.5" y="370" width="8" height="8.3" rx="1.2" fill="#e85a3c"/><rect x="652.5" y="370" width="8" height="3" rx="1.2" fill="#f07a5a"/><rect x="654.8" y="372" width="3.4" height="4.4" rx="1.5" fill="none" stroke="#fbd0b8" stroke-width="0.8"/>
<text x="650.5" y="387.4" font-size="7" font-weight="normal" fill="#131b30" stroke="#131b30" stroke-width="0.22" text-anchor="end" >Out</text>
<rect x="652.7" y="380.5" width="7.6" height="9" fill="#eef2f6" stroke="#b0bccc" stroke-width="0.5"/><rect x="654.5" y="382.5" width="2" height="3" fill="#98a4b4"/><rect x="656.8" y="384" width="2.4" height="4.5" fill="#a8b8d8"/>
<rect x="492.2" y="388.95" width="172.3" height="1.5" fill="#50708e"/>
<rect x="492.2" y="393.90" width="172.3" height="2.0" fill="#2f3b4d"/>
<rect x="551" y="396.8" width="8.5" height="5" fill="#2030c8"/><rect x="553" y="397.8" width="1" height="3" fill="#a0b0ff"/>
<text x="561.5" y="402.5" font-size="7" font-weight="normal" fill="#1e3264" stroke="#1e3264" stroke-width="0.2" text-anchor="start" >I2C Channels</text>
<rect x="124.70" y="180.70" width="3.6" height="3.6" fill="#fff" stroke="#1a1a1a" stroke-width="0.95"/>
<rect x="124.70" y="190.70" width="3.6" height="3.6" fill="#fff" stroke="#1a1a1a" stroke-width="0.95"/>
<rect x="205.70" y="191.00" width="3.6" height="3.6" fill="#fff" stroke="#1a1a1a" stroke-width="0.95"/>
<rect x="205.70" y="211.00" width="3.6" height="3.6" fill="#fff" stroke="#1a1a1a" stroke-width="0.95"/>
<rect x="205.70" y="220.70" width="3.6" height="3.6" fill="#fff" stroke="#1a1a1a" stroke-width="0.95"/>
<rect x="226.40" y="180.70" width="3.6" height="3.6" fill="#fff" stroke="#a83838" stroke-width="0.95"/>
<rect x="307.20" y="180.70" width="3.6" height="3.6" fill="#fff" stroke="#a83838" stroke-width="0.95"/>
<rect x="348.50" y="180.70" width="3.6" height="3.6" fill="#fff" stroke="#1a1a1a" stroke-width="0.95"/>
<rect x="398.70" y="180.70" width="3.6" height="3.6" fill="#fff" stroke="#1a1a1a" stroke-width="0.95"/>
<rect x="490.00" y="-2.60" width="3.6" height="3.6" fill="#fff" stroke="#1a1a1a" stroke-width="0.95"/>
<rect x="490.00" y="17.80" width="3.6" height="3.6" fill="#fff" stroke="#1a1a1a" stroke-width="0.95"/>
<rect x="662.60" y="18.20" width="3.6" height="3.6" fill="#fff" stroke="#1a1a1a" stroke-width="0.95"/>
<rect x="490.00" y="58.50" width="3.6" height="3.6" fill="#fff" stroke="#1a1a1a" stroke-width="0.95"/>
<rect x="662.60" y="58.50" width="3.6" height="3.6" fill="#fff" stroke="#1a1a1a" stroke-width="0.95"/>
<rect x="490.00" y="68.70" width="3.6" height="3.6" fill="#fff" stroke="#1a1a1a" stroke-width="0.95"/>
<rect x="662.60" y="79.00" width="3.6" height="3.6" fill="#fff" stroke="#1a1a1a" stroke-width="0.95"/>
<rect x="662.60" y="89.20" width="3.6" height="3.6" fill="#fff" stroke="#1a1a1a" stroke-width="0.95"/>
<rect x="490.00" y="109.80" width="3.6" height="3.6" fill="#fff" stroke="#1a1a1a" stroke-width="0.95"/>
<rect x="490.00" y="129.60" width="3.6" height="3.6" fill="#fff" stroke="#1a1a1a" stroke-width="0.95"/>
<rect x="490.00" y="149.80" width="3.6" height="3.6" fill="#fff" stroke="#1a1a1a" stroke-width="0.95"/>
<rect x="490.00" y="160.00" width="3.6" height="3.6" fill="#fff" stroke="#1a1a1a" stroke-width="0.95"/>
<rect x="662.60" y="129.30" width="3.6" height="3.6" fill="#fff" stroke="#1a1a1a" stroke-width="0.95"/>
<rect x="662.60" y="139.50" width="3.6" height="3.6" fill="#fff" stroke="#1a1a1a" stroke-width="0.95"/>
<rect x="662.60" y="149.50" width="3.6" height="3.6" fill="#fff" stroke="#1a1a1a" stroke-width="0.95"/>
<rect x="662.60" y="160.20" width="3.6" height="3.6" fill="#fff" stroke="#1a1a1a" stroke-width="0.95"/>
<rect x="662.60" y="180.60" width="3.6" height="3.6" fill="#fff" stroke="#1a1a1a" stroke-width="0.95"/>
<rect x="662.60" y="190.80" width="3.6" height="3.6" fill="#fff" stroke="#1a1a1a" stroke-width="0.95"/>
<rect x="662.60" y="200.70" width="3.6" height="3.6" fill="#fff" stroke="#1a1a1a" stroke-width="0.95"/>
<rect x="662.60" y="210.80" width="3.6" height="3.6" fill="#fff" stroke="#1a1a1a" stroke-width="0.95"/>
<rect x="662.60" y="220.80" width="3.6" height="3.6" fill="#fff" stroke="#1a1a1a" stroke-width="0.95"/>
<rect x="662.60" y="230.90" width="3.6" height="3.6" fill="#fff" stroke="#1a1a1a" stroke-width="0.95"/>
<rect x="662.60" y="241.00" width="3.6" height="3.6" fill="#fff" stroke="#1a1a1a" stroke-width="0.95"/>
<rect x="662.60" y="251.30" width="3.6" height="3.6" fill="#fff" stroke="#1a1a1a" stroke-width="0.95"/>
<rect x="662.60" y="261.40" width="3.6" height="3.6" fill="#fff" stroke="#1a1a1a" stroke-width="0.95"/>
<rect x="662.60" y="271.50" width="3.6" height="3.6" fill="#fff" stroke="#1a1a1a" stroke-width="0.95"/>
<rect x="662.60" y="281.70" width="3.6" height="3.6" fill="#fff" stroke="#1a1a1a" stroke-width="0.95"/>
<rect x="662.60" y="291.90" width="3.6" height="3.6" fill="#fff" stroke="#1a1a1a" stroke-width="0.95"/>
<rect x="662.60" y="302.00" width="3.6" height="3.6" fill="#fff" stroke="#1a1a1a" stroke-width="0.95"/>
<rect x="662.60" y="312.10" width="3.6" height="3.6" fill="#fff" stroke="#1a1a1a" stroke-width="0.95"/>
<rect x="662.60" y="332.20" width="3.6" height="3.6" fill="#fff" stroke="#1a1a1a" stroke-width="0.95"/>
<rect x="490.00" y="373.50" width="3.6" height="3.6" fill="#fff" stroke="#1a1a1a" stroke-width="0.95"/>
<rect x="662.60" y="373.50" width="3.6" height="3.6" fill="#fff" stroke="#1a1a1a" stroke-width="0.95"/>
<rect x="662.60" y="383.40" width="3.6" height="3.6" fill="#fff" stroke="#1a1a1a" stroke-width="0.95"/>

</svg></body></html>
